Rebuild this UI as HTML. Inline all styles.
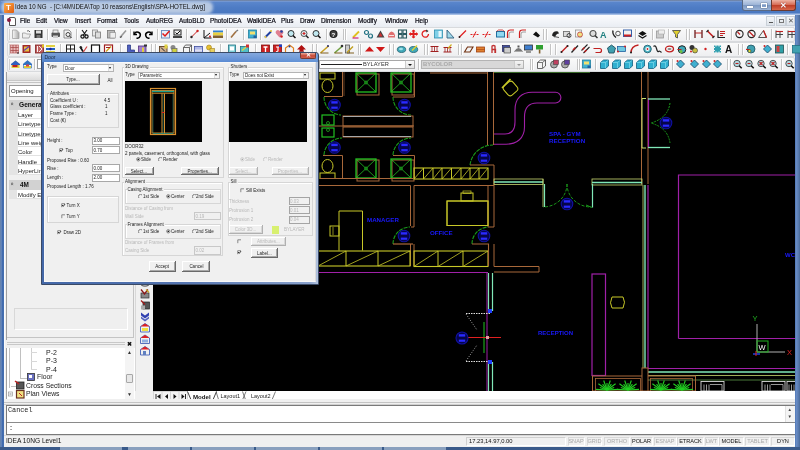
<!DOCTYPE html><html><head><meta charset="utf-8"><style>
*{margin:0;padding:0;box-sizing:border-box}
html,body{width:800px;height:450px;overflow:hidden;background:#f0f0f0;font-family:"Liberation Sans",sans-serif;color:#000}
.a{position:absolute}
.t{position:absolute;white-space:nowrap;line-height:1}
#frame{left:0;top:0;width:800px;height:450px;background:linear-gradient(90deg,#4f6d98 0,#7f9ac4 1px,#3f69ad 2px,#4670b0 4px,#4670b0 795px,#6a8ec8 796px,#5d7fb5 798px,#4a6a98 800px)}
#title{left:0;top:0;width:800px;height:15px;background:linear-gradient(180deg,#55657e 0,#8aa6d6 1px,#5a86cc 2px,#4d7bc4 8px,#4a78c0 13px,#a6bfe6 14px);border-radius:4px 4px 0 0}
#inner{left:4px;top:15px;width:791px;height:432px;background:#f0f0f0}
#menubar{left:4px;top:15px;width:791px;height:12px;background:linear-gradient(180deg,#fbfcfe,#e9edf3)}
#draw{left:153px;top:72px;width:642px;height:319px;background:#000;overflow:hidden}
.tb{position:absolute;height:14.5px;background:linear-gradient(180deg,#fafafa,#eeeff1);border:1px solid #d8dadd;border-radius:2px}
.sep{position:absolute;width:1px;height:11px;background:#c8c8c8;border-right:1px solid #fff}
.ic{position:absolute;width:9px;height:9px}
.menu{font-size:7px;color:#0a0a14;-webkit-text-stroke:0.2px #0a0a14}
</style></head><body><div id="wrap" class="a" style="left:0;top:0;width:800px;height:450px;overflow:hidden;filter:blur(0.35px)">
<div id="frame" class="a"></div>
<div id="title" class="a"></div>
<div class="a" style="left:1px;top:1px;width:212px;height:13px;background:#b8c9e2;border-radius:6px;filter:blur(1.5px)"></div>
<div class="a" style="left:4px;top:3px;width:10px;height:10px;background:linear-gradient(135deg,#ffb04a,#e05a10);border-radius:1px"></div>
<div class="t" style="left:6px;top:4px;font-size:8px;font-weight:bold;color:#fff">T</div>
<div class="t" style="left:15px;top:3px;font-size:7.6px;color:#111;transform-origin:0 0;transform:scaleX(0.813)">Idea 10 NG&nbsp; - [C:\4M\IDEA\Top 10 reasons\English\SPA-HOTEL.dwg]</div>
<div class="a" style="left:742px;top:0;width:15.5px;height:11px;background:linear-gradient(180deg,#c4d2e8,#9fb6d8 45%,#7e9ac4 55%,#9cb4d6);border:1px solid #5a6a84;border-top:none;border-radius:0 0 0 3px"></div>
<div class="a" style="left:746.5px;top:6px;width:6px;height:1.6px;background:#fff;box-shadow:0 0 1px #333"></div>
<div class="a" style="left:757px;top:0;width:14.5px;height:11px;background:linear-gradient(180deg,#c4d2e8,#9fb6d8 45%,#7e9ac4 55%,#9cb4d6);border:1px solid #5a6a84;border-top:none;border-left:none"></div>
<div class="a" style="left:760.5px;top:3px;width:6.5px;height:5px;border:1px solid #fff;border-top-width:1.6px;box-shadow:0 0 1px #333"></div>
<div class="a" style="left:771px;top:0;width:25px;height:11px;background:linear-gradient(180deg,#eeb4a4,#d8705a 45%,#c04028 55%,#d8684c);border:1px solid #6a3a30;border-top:none;border-radius:0 0 3px 0"></div>
<div class="t" style="left:780px;top:1.5px;font-size:8px;font-weight:bold;color:#fff;text-shadow:0 0 1px #600">&#x2715;</div>
<div id="inner" class="a"></div>
<div id="menubar" class="a"></div>
<div class="t menu" style="left:20px;top:18px;font-size:6.4px">File</div>
<div class="t menu" style="left:36px;top:18px;font-size:6.4px">Edit</div>
<div class="t menu" style="left:54px;top:18px;font-size:6.4px">View</div>
<div class="t menu" style="left:75px;top:18px;font-size:6.4px">Insert</div>
<div class="t menu" style="left:97px;top:18px;font-size:6.4px">Format</div>
<div class="t menu" style="left:124px;top:18px;font-size:6.4px">Tools</div>
<div class="t menu" style="left:146px;top:18px;font-size:6.4px">AutoREG</div>
<div class="t menu" style="left:179px;top:18px;font-size:6.4px">AutoBLD</div>
<div class="t menu" style="left:210px;top:18px;font-size:6.4px">PhotoIDEA</div>
<div class="t menu" style="left:247px;top:18px;font-size:6.4px">WalkIDEA</div>
<div class="t menu" style="left:281px;top:18px;font-size:6.4px">Plus</div>
<div class="t menu" style="left:300px;top:18px;font-size:6.4px">Draw</div>
<div class="t menu" style="left:321px;top:18px;font-size:6.4px">Dimension</div>
<div class="t menu" style="left:358px;top:18px;font-size:6.4px">Modify</div>
<div class="t menu" style="left:385px;top:18px;font-size:6.4px">Window</div>
<div class="t menu" style="left:415px;top:18px;font-size:6.4px">Help</div>
<div class="a" style="left:9px;top:17px;width:7px;height:9px;background:#fff;border:1px solid #555;border-radius:0 2px 0 0"></div>
<div class="a" style="left:7px;top:18px;width:4px;height:4px;background:#8a1a40;border-radius:50%"></div>
<div class="a" style="left:766px;top:16px;width:9px;height:10px;background:linear-gradient(180deg,#f4f6f8,#dde3ea);border:1px solid #c9d0d8"></div>
<div class="a" style="left:776px;top:16px;width:10px;height:10px;background:linear-gradient(180deg,#f4f6f8,#dde3ea);border:1px solid #c9d0d8"></div>
<div class="a" style="left:786px;top:16px;width:9px;height:10px;background:linear-gradient(180deg,#f4f6f8,#dde3ea);border:1px solid #c9d0d8"></div>
<div class="a" style="left:769px;top:22px;width:4px;height:1px;background:#555"></div>
<div class="a" style="left:779px;top:19px;width:5px;height:4px;border:1px solid #777"></div>
<div class="t" style="left:788px;top:17px;font-size:7px;color:#555">&#x2715;</div>
<div class="tb" style="left:7px;top:27px;width:788px"></div>
<div class="tb" style="left:7px;top:42px;width:788px"></div>
<div class="tb" style="left:7px;top:57px;width:788px"></div>
<svg class="a" style="left:0;top:0" width="800" height="75" viewBox="0 0 800 75"><g transform="translate(11,29.5)"><defs><linearGradient id="gd" x1="0" x2="1"><stop offset="0" stop-color="#fafafa"/><stop offset="1" stop-color="#a8a8a8"/></linearGradient></defs><path d="M1.5 0.5h4l2.5 2.5v6h-6.5z" fill="url(#gd)" stroke="#999" stroke-width=".7"/></g><g transform="translate(22,29.5)"><path d="M0.5 3.5h3l1 1h4l-1.5 4h-6.5z" fill="#eee" stroke="#999" stroke-width=".8"/><path d="M5 1.5q2-1 3 1" stroke="#555" fill="none" stroke-width=".9"/></g><g transform="translate(34,29.5)"><rect x="0.5" y="0.5" width="8" height="8" fill="#333"/><rect x="2" y="1" width="5" height="3" fill="#ddd"/><rect x="2.5" y="5.5" width="4" height="3" fill="#777"/></g><g transform="translate(51,29.5)"><rect x="0.5" y="3" width="8.5" height="4.5" rx="1" fill="#555"/><rect x="2" y="0.5" width="5" height="3" fill="#eee" stroke="#666" stroke-width=".6"/><rect x="2" y="6" width="5" height="2.5" fill="#ccc"/></g><g transform="translate(63,29.5)"><path d="M1 0.5h5l2 2v6h-7z" fill="#f4f4f4" stroke="#777" stroke-width=".8"/><circle cx="5" cy="5" r="2" fill="none" stroke="#333" stroke-width=".9"/><path d="M6.5 6.5l2 2" stroke="#333"/></g><g transform="translate(80,29.5)"><circle cx="2.5" cy="7" r="1.6" fill="none" stroke="#111" stroke-width="1.2"/><circle cx="6.5" cy="7" r="1.6" fill="none" stroke="#111" stroke-width="1.2"/><path d="M2 0.5l4 5.5M7 0.5l-4 5.5" stroke="#111" stroke-width="1.1"/></g><g transform="translate(92,29.5)"><rect x="0.5" y="0.5" width="5" height="6" fill="#e8e8e8" stroke="#888" stroke-width=".8"/><rect x="3.5" y="2.5" width="5" height="6" fill="#ddd" stroke="#777" stroke-width=".8"/></g><g transform="translate(107,29.5)"><rect x="0.5" y="1" width="7" height="7.5" fill="#bbb" stroke="#777" stroke-width=".8"/><rect x="3" y="3" width="5.5" height="5.5" fill="#eee" stroke="#888" stroke-width=".6"/></g><g transform="translate(119,29.5)"><path d="M1 8l6-7" stroke="#999" stroke-width="1.6"/><path d="M1 8l2-1" stroke="#555" stroke-width="1.2"/></g><g transform="translate(132,29.5)"><path d="M2 2v3h3" fill="none" stroke="#000" stroke-width="1.4"/><path d="M2.5 4.5a3 3 0 1 1 2 4" fill="none" stroke="#000" stroke-width="1.5"/></g><g transform="translate(145,29.5)"><path d="M7 2v3h-3" fill="none" stroke="#000" stroke-width="1.4"/><path d="M6.5 4.5a3 3 0 1 0 -2 4" fill="none" stroke="#000" stroke-width="1.5"/></g><g transform="translate(161,29.5)"><rect x="0.5" y="1" width="8" height="7.5" fill="#e8eef8" stroke="#6688bb" stroke-width=".9"/><path d="M1.5 4l2.5 2.5 4.5-5" fill="none" stroke="#e01818" stroke-width="1.5"/></g><g transform="translate(173,29.5)"><rect x="1" y="0.5" width="7" height="5" fill="#eee" stroke="#222" stroke-width="1"/><path d="M2.5 3l1.5 1.5 3-3" stroke="#111" fill="none"/><rect x="0" y="6.5" width="9" height="2" fill="#444"/></g><g transform="translate(190,29.5)"><path d="M1 8l7-7" stroke="#cc2020" stroke-width="1"/><circle cx="1.5" cy="7.5" r="1.2" fill="#222"/><circle cx="7.5" cy="1.5" r="1.2" fill="#cc2020"/></g><g transform="translate(203,29.5)"><path d="M1 0.5v8h7.5M1 8.5l6-5" stroke="#111" stroke-width="1" fill="none"/><circle cx="7" cy="7" r="1" fill="#d22"/></g><g transform="translate(213,29.5)"><rect x="0" y="1" width="10" height="2" fill="#3080d0"/><rect x="0" y="3" width="10" height="3" fill="#e8d040"/><rect x="0" y="6" width="10" height="2.5" fill="#806030"/></g><g transform="translate(230,29.5)"><path d="M1 8l5-6" stroke="#a07040" stroke-width="1.6"/><path d="M6 2l2-1.5" stroke="#777" stroke-width="1.4"/></g><g transform="translate(248,29.5)"><rect x="0.5" y="0.5" width="8" height="8" fill="#40b0d0" stroke="#2080a0" stroke-width=".8"/><rect x="2" y="2" width="5" height="3" fill="#f0e070"/><rect x="5.5" y="6" width="3" height="2.5" fill="#2060a0"/></g><g transform="translate(264,29.5)"><path d="M1 8l6-6" stroke="#2040a0" stroke-width="2"/><path d="M6 1.5l2 0" stroke="#e0c030" stroke-width="1.5"/><circle cx="1.5" cy="7.5" r="1" fill="#f0d040"/></g><g transform="translate(275,29.5)"><path d="M4.5 8l-3.5-4a2 2 0 0 1 3.5-2.5a2 2 0 0 1 3.5 2.5z" fill="#e08090"/><circle cx="6.5" cy="2" r="1.3" fill="#2040a0"/><circle cx="6.5" cy="7" r="1.3" fill="#d02020"/></g><g transform="translate(287,29.5)"><circle cx="4" cy="4" r="3" fill="#c0e8f0" stroke="#333" stroke-width="1"/><path d="M6 6l2.5 2.5" stroke="#111" stroke-width="1.5"/></g><g transform="translate(300,29.5)"><circle cx="4" cy="4" r="3" fill="#e0f0f4" stroke="#555" stroke-width="1"/><path d="M2.5 4h3M4 2.5v3" stroke="#d02020" stroke-width="1.1"/><path d="M6 6l2.5 2.5" stroke="#222" stroke-width="1.5"/></g><g transform="translate(312,29.5)"><circle cx="4" cy="4" r="3" fill="#c0e8f0" stroke="#333" stroke-width="1"/><path d="M6 6l2.5 2.5" stroke="#111" stroke-width="1.5"/></g><g transform="translate(329,29.5)"><circle cx="4.5" cy="4.5" r="4" fill="#1a1a1a"/><circle cx="4.5" cy="4.5" r="3" fill="#444"/><text x="2.6" y="7" font-size="6" font-weight="bold" fill="#fff" font-family="Liberation Sans">?</text></g><g transform="translate(352,29.5)"><path d="M1 8l6-6" stroke="#e0c020" stroke-width="1.8"/><path d="M0.5 8.5h6" stroke="#d02080" stroke-width="1.2"/></g><g transform="translate(364,29.5)"><circle cx="2.5" cy="3" r="2" fill="none" stroke="#207080" stroke-width="1.2"/><circle cx="6.5" cy="6.5" r="2" fill="none" stroke="#207080" stroke-width="1.2"/></g><g transform="translate(376,29.5)"><path d="M4.5 1l4 7h-8z" fill="#444"/><path d="M4.5 3l2 4h-4z" fill="#d03030"/></g><g transform="translate(387,29.5)"><path d="M1 8q0-5 3.5-6q4 1 3.5 6z" fill="#e07070"/><path d="M2 6h5" stroke="#fff" stroke-width=".8"/></g><g transform="translate(398,29.5)"><rect x="0.5" y="0.5" width="3.5" height="3.5" fill="none" stroke="#2a5a60" stroke-width="1.1"/><rect x="5" y="0.5" width="3.5" height="3.5" fill="none" stroke="#2a5a60" stroke-width="1.1"/><rect x="0.5" y="5" width="3.5" height="3.5" fill="none" stroke="#2a5a60" stroke-width="1.1"/><rect x="5" y="5" width="3.5" height="3.5" fill="none" stroke="#2a5a60" stroke-width="1.1"/></g><g transform="translate(409,29.5)"><path d="M4.5 0.5v8M0.5 4.5h8" stroke="#e02020" stroke-width="1.8"/><path d="M4.5 0l-2 2h4zM4.5 9l-2-2h4zM0 4.5l2-2v4zM9 4.5l-2-2v4z" fill="#e02020"/></g><g transform="translate(421,29.5)"><path d="M7.5 4.5a3.2 3.2 0 1 1 -2-3" fill="none" stroke="#e02020" stroke-width="1.3"/><path d="M5 0l2.5 1.5-2 1.5z" fill="#222"/></g><g transform="translate(434,29.5)"><rect x="0.5" y="0.5" width="8" height="8" fill="#80d0e8" stroke="#3090b0" stroke-width=".8"/><rect x="4.5" y="1.5" width="3" height="6" fill="#fff" opacity=".8"/></g><g transform="translate(446,29.5)"><path d="M1 8.5v-8l7 8z" fill="#a0d8e8" stroke="#306080" stroke-width=".9"/></g><g transform="translate(458,29.5)"><path d="M1 8l7-7" stroke="#e02020" stroke-width="1.2"/><circle cx="1.5" cy="7.5" r=".9" fill="#222"/></g><g transform="translate(470,29.5)"><path d="M0.5 5h8" stroke="#e02020" stroke-width="1" stroke-dasharray="2 1"/><path d="M3 8l3-6" stroke="#e02020" stroke-width="1"/></g><g transform="translate(482,29.5)"><path d="M0.5 5h8" stroke="#e02020" stroke-width="1" stroke-dasharray="2 1"/><path d="M3 8l3-6" stroke="#e02020" stroke-width="1"/></g><g transform="translate(496,29.5)"><rect x="0.5" y="2" width="8" height="5.5" fill="#90d8f0" stroke="#2070a0" stroke-width="1"/><path d="M0.5 2l2-1.5h4l2 1.5" stroke="#c02020" fill="none" stroke-width=".8"/></g><g transform="translate(506,29.5)"><path d="M1.5 8.5v-5q0-3 3-3h3.5" fill="none" stroke="#d02020" stroke-width="1.2"/><path d="M3 8.5v-4q0-2 2-2h3" fill="none" stroke="#888" stroke-width=".8"/></g><g transform="translate(518,29.5)"><path d="M1.5 8.5v-5q0-3 3-3h3.5" fill="none" stroke="#d02020" stroke-width="1.2"/><path d="M3 8.5v-4q0-2 2-2h3" fill="none" stroke="#888" stroke-width=".8"/></g><g transform="translate(532,29.5)"><path d="M1 5l3-3 4 4-2 2z" fill="#111"/></g><g transform="translate(551,29.5)"><path d="M1 6q1-5 6-4l1 2q-3 0-4 4z" fill="#222"/><path d="M3 7l5 1" stroke="#555"/></g><g transform="translate(563,29.5)"><rect x="0.5" y="2" width="6" height="5" fill="#ddd" stroke="#666" stroke-width=".8"/><circle cx="6" cy="6" r="2" fill="none" stroke="#444"/></g><g transform="translate(575,29.5)"><rect x="0.5" y="0.5" width="6" height="7" fill="#f4f4f4" stroke="#888" stroke-width=".7"/><circle cx="5" cy="5" r="2.5" fill="#f0e080" stroke="#c04040" stroke-width=".8"/></g><g transform="translate(589,29.5)"><circle cx="4" cy="4" r="3" fill="#ddd" stroke="#555" stroke-width="1.2"/><path d="M6 6l2.5 2.5" stroke="#333" stroke-width="1.5"/></g><g transform="translate(600,29.5)"><text x="0" y="8" font-size="9" font-weight="bold" fill="#208080" font-family="Liberation Sans">A</text></g><g transform="translate(612,29.5)"><path d="M1 1q-1 4 3 7" stroke="#222" stroke-width="1.4" fill="none"/><circle cx="6" cy="4" r="2.3" fill="none" stroke="#444" stroke-width=".9"/></g><g transform="translate(623,29.5)"><rect x="0.5" y="0.5" width="8" height="6.5" fill="#f0f0f0" stroke="#2050a0" stroke-width=".9"/><rect x="1" y="5" width="7" height="2" fill="#d02020"/></g><g transform="translate(638,29.5)"><path d="M0.5 4l4-2.5 4 2.5-4 2.5z" fill="#111"/><path d="M0.5 6l4 2.5 4-2.5" stroke="#111" fill="none" stroke-width="1.2"/></g><g transform="translate(656,29.5)"><rect x="0.5" y="1.5" width="7" height="7" fill="#ccc" stroke="#999" stroke-width=".8"/><rect x="2.5" y="0.5" width="6" height="4" fill="#eee" stroke="#aaa" stroke-width=".6"/></g><g transform="translate(672,29.5)"><path d="M0.5 1h8l-3 4v3.5l-2-1v-2.5z" fill="#e0d030" stroke="#444" stroke-width=".8"/></g><g transform="translate(694,29.5)"><path d="M1 0.5v8M8 0.5v8M1 3.5h7" stroke="#c02020" stroke-width="1.1"/><path d="M1 0.5v8M8 0.5v8" stroke="#444" stroke-width=".8"/></g><g transform="translate(706,29.5)"><path d="M1.5 1.5l6 6" stroke="#c02020" stroke-width="1.6"/><path d="M0.5 2.5l2-2M6.5 8.5l2-2" stroke="#222" stroke-width="1.2"/></g><g transform="translate(717,29.5)"><path d="M1 1v7h7" stroke="#222" stroke-width="1.2" fill="none"/><path d="M3 2h5M3 4h5M3 6h3" stroke="#c02020" stroke-width="1"/></g><g transform="translate(735,29.5)"><circle cx="4.5" cy="4.5" r="3.6" fill="none" stroke="#222" stroke-width="1.1"/><path d="M2.5 2.5l2.5 2.5" stroke="#c02020" stroke-width="1.2"/></g><g transform="translate(747,29.5)"><circle cx="4.5" cy="4.5" r="3.6" fill="none" stroke="#222" stroke-width="1.1"/><path d="M2 2l5 5" stroke="#c02020" stroke-width="1.3"/></g><g transform="translate(758,29.5)"><path d="M0.5 8h8l-3-7z" fill="none" stroke="#555" stroke-width="1"/><path d="M5.5 1l3 7" stroke="#c02020" stroke-width="1.3"/></g><g transform="translate(775,29.5)"><path d="M1 1v7.5M1 2h7M1 5h7M5 2v6.5" stroke="#444" stroke-width="1"/><path d="M1 2h7" stroke="#c02020" stroke-width="1.1"/></g><g transform="translate(787,29.5)"><path d="M1 1v7.5M1 2h7M1 5h7M5 2v6.5" stroke="#444" stroke-width="1"/><path d="M1 2h7" stroke="#c02020" stroke-width="1.1"/></g><g transform="translate(10,44.5)"><rect x="0.5" y="0.5" width="8" height="8" fill="#e8b8b8" stroke="#c07070" stroke-width=".8"/><path d="M3 0.5v8M6 0.5v8M0.5 3h8M0.5 6h8" stroke="#a04040" stroke-width=".7"/><circle cx="8" cy="8.5" r=".8" fill="#111"/></g><g transform="translate(22,44.5)"><rect x="0.5" y="0.5" width="8" height="8" fill="#a02828"/><rect x="2" y="2" width="5" height="5" fill="#e8c040"/><path d="M2 6l5-4" stroke="#6040c0" stroke-width="1.2"/></g><g transform="translate(35,44.5)"><rect x="0.5" y="0.5" width="8" height="8" fill="#c06060" stroke="#802020" stroke-width=".8"/><path d="M2.5 1.5v6M4 1.5l3 3-3 3" stroke="#fff" stroke-width=".9" fill="none"/><rect x="7" y="0" width="2" height="3" fill="#e0c020"/></g><g transform="translate(46,44.5)"><rect x="0" y="0.5" width="9" height="2" fill="#e0d040"/><rect x="0" y="3.5" width="9" height="2" fill="#2060c0"/><rect x="0" y="6.5" width="9" height="2" fill="#e0d040"/><circle cx="4.5" cy="4.5" r="1.2" fill="#2020a0"/></g><g transform="translate(66,44.5)"><rect x="0.5" y="0.5" width="8" height="8" fill="#fff" stroke="#222" stroke-width="1"/><path d="M4.5 0.5v8M0.5 4.5h8" stroke="#222" stroke-width="1"/></g><g transform="translate(79,44.5)"><path d="M1 2l3 5" stroke="#111" stroke-width="1.6"/><path d="M4 8l4-6" stroke="#d04040" stroke-width="1.2"/><circle cx="2" cy="3" r="1.2" fill="#222"/></g><g transform="translate(91,44.5)"><rect x="0.5" y="0.5" width="8" height="8" fill="#fff" stroke="#111" stroke-width="1.2"/></g><g transform="translate(104,44.5)"><rect x="0.5" y="0.5" width="8" height="8" fill="#fff" stroke="#a02020" stroke-width="1.2"/><path d="M2 7l5-5" stroke="#d0a020" stroke-width="1.4"/><path d="M2 3h4" stroke="#a02020"/></g><g transform="translate(126,44.5)"><path d="M1.5 0.5v8h7v-3h-4v-5z" fill="#5060c0" stroke="#203080" stroke-width=".7"/></g><g transform="translate(138,44.5)"><rect x="0.5" y="1.5" width="7.5" height="7" fill="#a080d0" stroke="#503080" stroke-width=".8"/><rect x="4" y="3" width="2" height="5" fill="#e0d040"/><rect x="6" y="0" width="3" height="2" fill="#333"/></g><g transform="translate(159,44.5)"><rect x="0.5" y="2" width="7.5" height="6.5" fill="#d0b090" stroke="#604020" stroke-width=".9"/><path d="M2 3l4 4" stroke="#222"/><rect x="5.5" y="0" width="3" height="4" fill="#e0d040"/></g><g transform="translate(170,44.5)"><circle cx="3" cy="3" r="2.5" fill="#888"/><rect x="2" y="4" width="5" height="4.5" fill="#d0d040" stroke="#666" stroke-width=".7"/></g><g transform="translate(183,44.5)"><path d="M0.5 3l2-2.5h6v6l-2 2.5h-6z" fill="#f4f4f4" stroke="#444" stroke-width=".8"/><path d="M0.5 3h6v5.5M6.5 3l2-2.5" stroke="#444" stroke-width=".8" fill="none"/></g><g transform="translate(194,44.5)"><rect x="0.5" y="2" width="8" height="6.5" fill="#b0b8e8" stroke="#4050a0" stroke-width=".8"/><rect x="1" y="5" width="7" height="2" fill="#e0e0f0"/></g><g transform="translate(206,44.5)"><circle cx="3" cy="3" r="2.5" fill="#e8c030" stroke="#a08020" stroke-width=".6"/><rect x="4" y="4" width="4.5" height="4.5" fill="#e8d060" stroke="#a08020" stroke-width=".6"/></g><g transform="translate(228,44.5)"><rect x="0.5" y="0.5" width="7" height="8" fill="#80d0d8" stroke="#207080" stroke-width=".8"/><rect x="2" y="2" width="4" height="4" fill="#fff"/></g><g transform="translate(240,44.5)"><rect x="0.5" y="2" width="8" height="6.5" fill="#50c0c8" stroke="#207080" stroke-width=".8"/><path d="M2 6l5-4" stroke="#e0d040" stroke-width="1.4"/><rect x="6" y="0" width="3" height="3" fill="#d03030"/></g><g transform="translate(261,44.5)"><rect x="0.5" y="0.5" width="8" height="8.5" fill="#d02020" stroke="#801010" stroke-width=".8"/><path d="M2.5 2.5h4M4.5 2.5v5" stroke="#fff" stroke-width="1.3"/></g><g transform="translate(273,44.5)"><rect x="0.5" y="0.5" width="8" height="8.5" fill="#d02020" stroke="#801010" stroke-width=".8"/><path d="M3 2.5h3M5 2.5v4l-2 1" stroke="#fff" stroke-width="1.1" fill="none"/><rect x="6" y="0" width="3" height="2.5" fill="#2040c0"/></g><g transform="translate(285,44.5)"><path d="M0.5 8.5v-5l4-3 4 3v5z" fill="#f4f4f4" stroke="#e08020" stroke-width="1.2"/><circle cx="4.5" cy="2" r="1" fill="#2040a0"/></g><g transform="translate(297,44.5)"><path d="M4.5 0.5l4.5 4.5h-2.5v2h-4v-2h-2.5z" fill="#b01010"/><rect x="2" y="7" width="5" height="2" fill="#700a0a"/></g><g transform="translate(320,44.5)"><path d="M0.5 8.5l8-7" stroke="#c8a020" stroke-width="1.6"/><path d="M0.5 8.5h8" stroke="#806020" stroke-width="1"/><circle cx="8" cy="1.5" r="1" fill="#2a2a6a"/></g><g transform="translate(334,44.5)"><path d="M0.5 8.5l8-7" stroke="#70a040" stroke-width="1.6"/><path d="M0.5 8.5h8" stroke="#806020" stroke-width="1"/><circle cx="8" cy="1.5" r="1.3" fill="#333"/></g><g transform="translate(345,44.5)"><rect x="0.5" y="0.5" width="4" height="8" fill="#ccc" stroke="#555" stroke-width=".8"/><path d="M2 8l6-6" stroke="#c0a020" stroke-width="1.4"/><path d="M2 8.5h7" stroke="#806020"/></g><g transform="translate(365,44.5)"><path d="M4.5 2l4.5 5h-9z" fill="#d01818"/></g><g transform="translate(376,44.5)"><path d="M4.5 7.5l4.5-5h-9z" fill="#d01818"/></g><g transform="translate(397,44.5)"><ellipse cx="4.5" cy="5" rx="4.2" ry="3" fill="#40a8b8" stroke="#206070" stroke-width=".8"/><ellipse cx="4" cy="4.5" rx="2" ry="1.2" fill="#a0e0e8"/></g><g transform="translate(409,44.5)"><ellipse cx="4.5" cy="5" rx="4.2" ry="3" fill="#40a8b8" stroke="#206070" stroke-width=".8"/><path d="M3 6l5-5" stroke="#e0d030" stroke-width="1.4"/></g><g transform="translate(430,44.5)"><path d="M0.5 2h8M0.5 7h8" stroke="#a02020" stroke-width="1.2"/><path d="M2 2v5M4.5 2v5M7 2v5" stroke="#a02020" stroke-width=".8"/></g><g transform="translate(443,44.5)"><path d="M0.5 3h8M0.5 7.5h8" stroke="#a02020" stroke-width="1.2"/><path d="M2 3v4.5M4.5 3v4.5M7 3v4.5" stroke="#a02020" stroke-width=".8"/><path d="M5 4l3.5-4" stroke="#d0b020" stroke-width="1.2"/></g><g transform="translate(464,44.5)"><path d="M0.5 7.5l3-5h5.5l-3 5z" fill="#f4f4f4" stroke="#703010" stroke-width="1.1"/></g><g transform="translate(476,44.5)"><rect x="0.5" y="2.5" width="8" height="5" fill="#e08030" stroke="#a04010" stroke-width=".8"/><path d="M0.5 5h8" stroke="#a04010" stroke-width=".6"/></g><g transform="translate(489,44.5)"><path d="M3 8.5v-7q1.5-1 3 0v7M3 5h3.5v3.5" fill="none" stroke="#c03030" stroke-width="1.3"/></g><g transform="translate(502,44.5)"><rect x="0.5" y="1" width="7" height="6" fill="#4050a0" stroke="#202050" stroke-width=".7"/><rect x="2" y="3" width="6.5" height="5.5" fill="#ccc" stroke="#333" stroke-width=".6"/></g><g transform="translate(514,44.5)"><path d="M0.5 6.5q4-6 8 0z" fill="#777"/><rect x="3.5" y="1" width="2" height="2" fill="#555"/><rect x="0" y="6.5" width="9" height="1" fill="#aaa"/></g><g transform="translate(524,44.5)"><rect x="0.5" y="0.5" width="8" height="5" fill="#4080d0" stroke="#333" stroke-width=".8"/><rect x="2" y="6" width="5" height="2.5" fill="#999"/></g><g transform="translate(535,44.5)"><rect x="1" y="0.5" width="7" height="4.5" fill="#30a030"/><rect x="3.8" y="5" width="1.6" height="4" fill="#806030"/></g><g transform="translate(560,44.5)"><path d="M1 8l7-7" stroke="#c02020" stroke-width="1.4"/><circle cx="1.5" cy="7.5" r="1" fill="#222"/><circle cx="7.5" cy="1.5" r="1" fill="#222"/></g><g transform="translate(570,44.5)"><path d="M1.5 8l6.5-7" stroke="#222" stroke-width="1.3"/><path d="M3 5.5l2.5-2.5" stroke="#c02020" stroke-width="1.6"/></g><g transform="translate(581,44.5)"><path d="M0.5 6l6-6M2.5 8.5l6-6" stroke="#222" stroke-width="1.1"/><path d="M1.5 5l2-2M3.5 7.5l2-2" stroke="#c02020" stroke-width="1.4"/></g><g transform="translate(593,44.5)"><path d="M0.5 4h6q2 0 2 2t-2 2h-4" fill="none" stroke="#c02020" stroke-width="1.2"/></g><g transform="translate(607,44.5)"><path d="M4.5 0.5l4 3-1.5 5h-5l-1.5-5z" fill="#40a0b0" stroke="#205060" stroke-width=".9"/></g><g transform="translate(617,44.5)"><rect x="0.5" y="2" width="8" height="5" fill="#70c8e0" stroke="#2060a0" stroke-width=".8"/><circle cx="1" cy="7" r="1" fill="#d02020"/><circle cx="8" cy="2" r="1" fill="#d02020"/></g><g transform="translate(630,44.5)"><path d="M1 8.5q0-7 7.5-8" fill="none" stroke="#c02020" stroke-width="1.4"/><circle cx="1" cy="8" r="1" fill="#222"/></g><g transform="translate(643,44.5)"><circle cx="4.5" cy="4.5" r="3.8" fill="#50b8c8" stroke="#206070" stroke-width=".9"/><circle cx="4.5" cy="4.5" r="2" fill="#fff"/><circle cx="4.5" cy="4.5" r=".9" fill="#c02020"/></g><g transform="translate(653,44.5)"><path d="M0.5 2q2-2 3 2t2 3 3 1" fill="none" stroke="#222" stroke-width="1.2"/></g><g transform="translate(665,44.5)"><ellipse cx="4.5" cy="4.5" rx="4" ry="2.8" fill="none" stroke="#c02020" stroke-width="1.3"/><ellipse cx="4.5" cy="4.5" rx="2" ry="1" fill="#888"/></g><g transform="translate(677,44.5)"><circle cx="5" cy="5" r="3.8" fill="#40a8b8" stroke="#222" stroke-width="1"/><path d="M0.5 5h4" stroke="#c02020"/><circle cx="4" cy="7" r="1.5" fill="#70c040"/></g><g transform="translate(689,44.5)"><circle cx="3" cy="3" r="2.5" fill="#333"/><circle cx="6" cy="6" r="2.5" fill="#c8c040" stroke="#333" stroke-width=".6"/><circle cx="2" cy="7" r="1" fill="#d02020"/></g><g transform="translate(701,44.5)"><circle cx="4.5" cy="4.5" r="1.2" fill="#d02020"/></g><g transform="translate(713,44.5)"><path d="M1 1h7v7h-7z" fill="#30a0b0"/><path d="M3 0v2M6 0v2M3 7v2M6 7v2M0 3h2M0 6h2M7 3h2M7 6h2" stroke="#f0f0f0" stroke-width="1"/></g><g transform="translate(725,44.5)"><text x="0" y="8.5" font-size="10" font-weight="bold" fill="#111" font-family="Liberation Sans">A</text></g><g transform="translate(746,44.5)"><circle cx="5" cy="4.5" r="4" fill="#40a0b0" stroke="#205060" stroke-width=".8"/><path d="M0 5h4" stroke="#c02020"/><circle cx="3.5" cy="6.5" r="1.5" fill="#e0e040" stroke="#333" stroke-width=".5"/></g><g transform="translate(763,44.5)"><path d="M4.5 0.5l4 4-4 4-4-4z" fill="#40b0d0" stroke="#205070" stroke-width=".9"/><circle cx="1.5" cy="1.5" r="1" fill="#d02020"/></g><g transform="translate(775,44.5)"><rect x="0.5" y="0.5" width="8" height="8" fill="#30a0a8" stroke="#205050" stroke-width=".8"/><rect x="1.5" y="1.5" width="3" height="6" fill="#d04040"/></g><g transform="translate(792,44.5)"><rect x="0.5" y="1" width="8" height="7.5" fill="#40a0b0" stroke="#207080" stroke-width=".8"/></g><g transform="translate(11,59.5)"><path d="M0.5 4.5l4-3.5 4 3.5v4h-8z" fill="#e0d040"/><path d="M0 4.5l4.5-3.5 4.5 3.5v1h-9z" fill="#3060c0"/><rect x="1.5" y="5.5" width="5" height="2" fill="#c02020"/></g><g transform="translate(23,59.5)"><path d="M0.5 4.5l4-3.5 4 3.5v4h-8z" fill="#f0f0f0" stroke="#3070c0" stroke-width=".7"/><path d="M0 4.5l4.5-3.5 4.5 3.5v1h-9z" fill="#3070c0"/><rect x="1" y="6.5" width="7" height="2" fill="#e0d030"/><rect x="3" y="5" width="3" height="2" fill="#e04040"/></g><g transform="translate(537,59.5)"><path d="M0.5 3l3-2.5h5v6l-3 2.5h-5z" fill="#f4f4f4" stroke="#444" stroke-width=".8"/><path d="M0.5 3h5v5.5M5.5 3l3-2.5" stroke="#444" stroke-width=".7" fill="none"/></g><g transform="translate(550,59.5)"><circle cx="4" cy="5" r="3.5" fill="#aaa" stroke="#444" stroke-width=".8"/><rect x="3.5" y="0.5" width="5" height="4.5" fill="#c04060" stroke="#444" stroke-width=".6"/></g><g transform="translate(561,59.5)"><circle cx="4" cy="5" r="3.5" fill="#aaa" stroke="#444" stroke-width=".8"/><rect x="3.5" y="0.5" width="5" height="4.5" fill="#6040a0" stroke="#444" stroke-width=".6"/></g><g transform="translate(582,59.5)"><rect x="0.5" y="0.5" width="8" height="8" fill="#40b0d0" stroke="#2080a0" stroke-width=".8"/><rect x="2" y="2" width="5" height="3" fill="#f0e070"/><rect x="5.5" y="6" width="3" height="2.5" fill="#2060a0"/></g><g transform="translate(600,59.5)"><path d="M0.5 3l3-2.5h5v6l-3 2.5h-5z" fill="#30b0d0" stroke="#106080" stroke-width=".8"/><path d="M0.5 3h5v5.5M5.5 3l3-2.5" stroke="#90e0f0" stroke-width=".6" fill="none"/></g><g transform="translate(612,59.5)"><path d="M0.5 3l3-2.5h5v6l-3 2.5h-5z" fill="#30b0d0" stroke="#106080" stroke-width=".8"/><path d="M0.5 3h5v5.5M5.5 3l3-2.5" stroke="#90e0f0" stroke-width=".6" fill="none"/></g><g transform="translate(624,59.5)"><path d="M0.5 3l3-2.5h5v6l-3 2.5h-5z" fill="#30b0d0" stroke="#106080" stroke-width=".8"/><path d="M0.5 3h5v5.5M5.5 3l3-2.5" stroke="#90e0f0" stroke-width=".6" fill="none"/></g><g transform="translate(636,59.5)"><path d="M0.5 3l3-2.5h5v6l-3 2.5h-5z" fill="#30b0d0" stroke="#106080" stroke-width=".8"/><path d="M0.5 3h5v5.5M5.5 3l3-2.5" stroke="#90e0f0" stroke-width=".6" fill="none"/></g><g transform="translate(648,59.5)"><path d="M0.5 3l3-2.5h5v6l-3 2.5h-5z" fill="#30b0d0" stroke="#106080" stroke-width=".8"/><path d="M0.5 3h5v5.5M5.5 3l3-2.5" stroke="#90e0f0" stroke-width=".6" fill="none"/></g><g transform="translate(660,59.5)"><path d="M0.5 3l3-2.5h5v6l-3 2.5h-5z" fill="#30b0d0" stroke="#106080" stroke-width=".8"/><path d="M0.5 3h5v5.5M5.5 3l3-2.5" stroke="#90e0f0" stroke-width=".6" fill="none"/></g><g transform="translate(676,59.5)"><path d="M4.5 0.5l4 4-4 4-4-4z" fill="#40b0d0" stroke="#205070" stroke-width=".9"/><circle cx="1.5" cy="1.5" r="1" fill="#d02020"/></g><g transform="translate(690,59.5)"><path d="M4.5 0.5l4 4-4 4-4-4z" fill="#40b0d0" stroke="#205070" stroke-width=".9"/><circle cx="1.5" cy="1.5" r="1" fill="#d02020"/></g><g transform="translate(702,59.5)"><path d="M4.5 0.5l4 4-4 4-4-4z" fill="#40b0d0" stroke="#205070" stroke-width=".9"/><circle cx="1.5" cy="1.5" r="1" fill="#d02020"/></g><g transform="translate(713,59.5)"><path d="M4.5 0.5l4 4-4 4-4-4z" fill="#40b0d0" stroke="#205070" stroke-width=".9"/><circle cx="1.5" cy="1.5" r="1" fill="#d02020"/></g><g transform="translate(733,59.5)"><circle cx="4" cy="4" r="3.2" fill="#b0d8e0" stroke="#444" stroke-width=".9"/><path d="M2.5 4h3" stroke="#c02020" stroke-width="1.1"/><path d="M6.2 6.2l2.5 2.5" stroke="#111" stroke-width="1.6"/></g><g transform="translate(745,59.5)"><circle cx="4" cy="4" r="3.2" fill="#b0d8e0" stroke="#444" stroke-width=".9"/><path d="M2.5 4h3" stroke="#c02020" stroke-width="1.1"/><path d="M6.2 6.2l2.5 2.5" stroke="#111" stroke-width="1.6"/></g><g transform="translate(757,59.5)"><circle cx="4" cy="4" r="3.2" fill="#b0d8e0" stroke="#444" stroke-width=".9"/><path d="M2.5 2.5l3 3M5.5 2.5l-3 3" stroke="#c02020" stroke-width="1.1"/><path d="M6.2 6.2l2.5 2.5" stroke="#111" stroke-width="1.6"/></g><g transform="translate(769,59.5)"><circle cx="4" cy="4" r="3.2" fill="#b0d8e0" stroke="#444" stroke-width=".9"/><path d="M2.5 2.5l3 3M5.5 2.5l-3 3" stroke="#c02020" stroke-width="1.1"/><path d="M6.2 6.2l2.5 2.5" stroke="#111" stroke-width="1.6"/></g><g transform="translate(785,59.5)"><circle cx="4" cy="4" r="3.2" fill="#b0d8e0" stroke="#444" stroke-width=".9"/><path d="M2.5 4h3" stroke="#c02020" stroke-width="1.1"/><path d="M6.2 6.2l2.5 2.5" stroke="#111" stroke-width="1.6"/></g><rect x="47" y="29" width="1" height="11" fill="#c4c4c4"/><rect x="48" y="29" width="1" height="11" fill="#fff"/><rect x="76" y="29" width="1" height="11" fill="#c4c4c4"/><rect x="77" y="29" width="1" height="11" fill="#fff"/><rect x="130" y="29" width="1" height="11" fill="#c4c4c4"/><rect x="131" y="29" width="1" height="11" fill="#fff"/><rect x="157" y="29" width="1" height="11" fill="#c4c4c4"/><rect x="158" y="29" width="1" height="11" fill="#fff"/><rect x="186" y="29" width="1" height="11" fill="#c4c4c4"/><rect x="187" y="29" width="1" height="11" fill="#fff"/><rect x="226" y="29" width="1" height="11" fill="#c4c4c4"/><rect x="227" y="29" width="1" height="11" fill="#fff"/><rect x="243" y="29" width="1" height="11" fill="#c4c4c4"/><rect x="244" y="29" width="1" height="11" fill="#fff"/><rect x="260" y="29" width="1" height="11" fill="#c4c4c4"/><rect x="261" y="29" width="1" height="11" fill="#fff"/><rect x="326" y="29" width="1" height="11" fill="#c4c4c4"/><rect x="327" y="29" width="1" height="11" fill="#fff"/><rect x="343" y="29" width="1" height="11" fill="#c4c4c4"/><rect x="344" y="29" width="1" height="11" fill="#fff"/><rect x="345" y="29" width="1" height="11" fill="#c4c4c4"/><rect x="346" y="29" width="1" height="11" fill="#fff"/><rect x="543" y="29" width="1" height="11" fill="#c4c4c4"/><rect x="544" y="29" width="1" height="11" fill="#fff"/><rect x="546" y="29" width="1" height="11" fill="#c4c4c4"/><rect x="547" y="29" width="1" height="11" fill="#fff"/><rect x="635" y="29" width="1" height="11" fill="#c4c4c4"/><rect x="636" y="29" width="1" height="11" fill="#fff"/><rect x="652" y="29" width="1" height="11" fill="#c4c4c4"/><rect x="653" y="29" width="1" height="11" fill="#fff"/><rect x="668" y="29" width="1" height="11" fill="#c4c4c4"/><rect x="669" y="29" width="1" height="11" fill="#fff"/><rect x="686" y="29" width="1" height="11" fill="#c4c4c4"/><rect x="687" y="29" width="1" height="11" fill="#fff"/><rect x="689" y="29" width="1" height="11" fill="#c4c4c4"/><rect x="690" y="29" width="1" height="11" fill="#fff"/><rect x="731" y="29" width="1" height="11" fill="#c4c4c4"/><rect x="732" y="29" width="1" height="11" fill="#fff"/><rect x="771" y="29" width="1" height="11" fill="#c4c4c4"/><rect x="772" y="29" width="1" height="11" fill="#fff"/><rect x="60" y="44" width="1" height="11" fill="#c4c4c4"/><rect x="61" y="44" width="1" height="11" fill="#fff"/><rect x="120" y="44" width="1" height="11" fill="#c4c4c4"/><rect x="121" y="44" width="1" height="11" fill="#fff"/><rect x="151" y="44" width="1" height="11" fill="#c4c4c4"/><rect x="152" y="44" width="1" height="11" fill="#fff"/><rect x="155" y="44" width="1" height="11" fill="#c4c4c4"/><rect x="156" y="44" width="1" height="11" fill="#fff"/><rect x="220" y="44" width="1" height="11" fill="#c4c4c4"/><rect x="221" y="44" width="1" height="11" fill="#fff"/><rect x="255" y="44" width="1" height="11" fill="#c4c4c4"/><rect x="256" y="44" width="1" height="11" fill="#fff"/><rect x="312" y="44" width="1" height="11" fill="#c4c4c4"/><rect x="313" y="44" width="1" height="11" fill="#fff"/><rect x="316" y="44" width="1" height="11" fill="#c4c4c4"/><rect x="317" y="44" width="1" height="11" fill="#fff"/><rect x="358" y="44" width="1" height="11" fill="#c4c4c4"/><rect x="359" y="44" width="1" height="11" fill="#fff"/><rect x="360" y="44" width="1" height="11" fill="#c4c4c4"/><rect x="361" y="44" width="1" height="11" fill="#fff"/><rect x="389" y="44" width="1" height="11" fill="#c4c4c4"/><rect x="390" y="44" width="1" height="11" fill="#fff"/><rect x="393" y="44" width="1" height="11" fill="#c4c4c4"/><rect x="394" y="44" width="1" height="11" fill="#fff"/><rect x="424" y="44" width="1" height="11" fill="#c4c4c4"/><rect x="425" y="44" width="1" height="11" fill="#fff"/><rect x="427" y="44" width="1" height="11" fill="#c4c4c4"/><rect x="428" y="44" width="1" height="11" fill="#fff"/><rect x="458" y="44" width="1" height="11" fill="#c4c4c4"/><rect x="459" y="44" width="1" height="11" fill="#fff"/><rect x="461" y="44" width="1" height="11" fill="#c4c4c4"/><rect x="462" y="44" width="1" height="11" fill="#fff"/><rect x="550" y="44" width="1" height="11" fill="#c4c4c4"/><rect x="551" y="44" width="1" height="11" fill="#fff"/><rect x="555" y="44" width="1" height="11" fill="#c4c4c4"/><rect x="556" y="44" width="1" height="11" fill="#fff"/><rect x="738" y="44" width="1" height="11" fill="#c4c4c4"/><rect x="739" y="44" width="1" height="11" fill="#fff"/><rect x="742" y="44" width="1" height="11" fill="#c4c4c4"/><rect x="743" y="44" width="1" height="11" fill="#fff"/><rect x="787" y="44" width="1" height="11" fill="#c4c4c4"/><rect x="788" y="44" width="1" height="11" fill="#fff"/><rect x="34" y="59" width="1" height="11" fill="#c4c4c4"/><rect x="35" y="59" width="1" height="11" fill="#fff"/><rect x="418" y="59" width="1" height="11" fill="#c4c4c4"/><rect x="419" y="59" width="1" height="11" fill="#fff"/><rect x="530" y="59" width="1" height="11" fill="#c4c4c4"/><rect x="531" y="59" width="1" height="11" fill="#fff"/><rect x="532" y="59" width="1" height="11" fill="#c4c4c4"/><rect x="533" y="59" width="1" height="11" fill="#fff"/><rect x="577" y="59" width="1" height="11" fill="#c4c4c4"/><rect x="578" y="59" width="1" height="11" fill="#fff"/><rect x="579" y="59" width="1" height="11" fill="#c4c4c4"/><rect x="580" y="59" width="1" height="11" fill="#fff"/><rect x="595" y="59" width="1" height="11" fill="#c4c4c4"/><rect x="596" y="59" width="1" height="11" fill="#fff"/><rect x="672" y="59" width="1" height="11" fill="#c4c4c4"/><rect x="673" y="59" width="1" height="11" fill="#fff"/><rect x="727" y="59" width="1" height="11" fill="#c4c4c4"/><rect x="728" y="59" width="1" height="11" fill="#fff"/><rect x="730" y="59" width="1" height="11" fill="#c4c4c4"/><rect x="731" y="59" width="1" height="11" fill="#fff"/><rect x="781" y="59" width="1" height="11" fill="#c4c4c4"/><rect x="782" y="59" width="1" height="11" fill="#fff"/><rect x="9" y="29" width="1" height="11" fill="#d0d0d0"/><rect x="9" y="44" width="1" height="11" fill="#d0d0d0"/><rect x="9" y="59" width="1" height="11" fill="#d0d0d0"/></svg>
<div class="a" style="left:37px;top:59px;width:6px;height:10px;background:#fff;border:1px solid #9a9a9a;border-right:none"></div>
<div class="a" style="left:319px;top:60px;width:96px;height:8.5px;background:#fff;border:1px solid #a8a8a8"></div>
<div class="a" style="left:321px;top:64px;width:41px;height:1px;background:#222"></div>
<div class="t" style="left:363px;top:61.8px;font-size:5.7px;color:#333">BYLAYER</div>
<div class="a" style="left:405px;top:61px;width:9px;height:6.5px;background:linear-gradient(#fafafa,#e4e4e4);border-left:1px solid #ccc"></div>
<div class="a" style="left:407.5px;top:63.5px;width:0;height:0;border-left:2.5px solid transparent;border-right:2.5px solid transparent;border-top:2.5px solid #111"></div>
<div class="a" style="left:421px;top:60px;width:103px;height:8.5px;background:#d8d8d8;border:1px solid #b4b4b4"></div>
<div class="t" style="left:423px;top:61.8px;font-size:5.9px;color:#a8a8a8;font-weight:bold">BYCOLOR</div>
<div class="a" style="left:514px;top:61px;width:9px;height:6.5px;background:linear-gradient(#f4f4f4,#e0e0e0);border-left:1px solid #ccc"></div>
<div class="a" style="left:516.5px;top:63.5px;width:0;height:0;border-left:2.5px solid transparent;border-right:2.5px solid transparent;border-top:2.5px solid #999"></div>
<div class="a" style="left:4px;top:72px;width:1px;height:328px;background:#fcfcfc"></div>
<div class="a" style="left:6px;top:72px;width:1px;height:327px;background:#a0a0a0"></div>
<div class="a" style="left:7px;top:72px;width:128px;height:9px;background:linear-gradient(#f4f4f4,#dcdcdc);border-bottom:1px solid #c8c8c8"></div>
<div class="a" style="left:7px;top:82px;width:127px;height:256px;border:1px solid #c4c4c4;border-left:none;background:#f0f0f0"></div>
<div class="a" style="left:9px;top:85px;width:130px;height:12px;background:#fff;border:1px solid #9a9a9a"></div>
<div class="t" style="left:11px;top:88.3px;font-size:6px;color:#111">Opening</div>
<div class="a" style="left:9px;top:100px;width:35px;height:9.5px;background:#d2d2d2"></div>
<div class="t" style="left:10.5px;top:101px;font-size:6px;color:#333;transform:rotate(90deg)">&#x00AB;</div>
<div class="t" style="left:19px;top:101.5px;font-size:6.6px;font-weight:bold;color:#111">General</div>
<div class="a" style="left:9px;top:109.50px;width:8px;height:9.33px;background:#e4e4e4"></div>
<div class="a" style="left:17px;top:109.50px;width:30px;height:9.33px;background:#fff;border-bottom:1px solid #e2e2e2;border-left:1px solid #e8e8e8"></div>
<div class="t" style="left:18px;top:111.90px;font-size:6px;color:#222">Layer</div>
<div class="a" style="left:9px;top:118.83px;width:8px;height:9.33px;background:#e4e4e4"></div>
<div class="a" style="left:17px;top:118.83px;width:30px;height:9.33px;background:#fff;border-bottom:1px solid #e2e2e2;border-left:1px solid #e8e8e8"></div>
<div class="t" style="left:18px;top:121.23px;font-size:6px;color:#222">Linetype</div>
<div class="a" style="left:9px;top:128.16px;width:8px;height:9.33px;background:#e4e4e4"></div>
<div class="a" style="left:17px;top:128.16px;width:30px;height:9.33px;background:#fff;border-bottom:1px solid #e2e2e2;border-left:1px solid #e8e8e8"></div>
<div class="t" style="left:18px;top:130.56px;font-size:6px;color:#222">Linetype scale</div>
<div class="a" style="left:9px;top:137.49px;width:8px;height:9.33px;background:#e4e4e4"></div>
<div class="a" style="left:17px;top:137.49px;width:30px;height:9.33px;background:#fff;border-bottom:1px solid #e2e2e2;border-left:1px solid #e8e8e8"></div>
<div class="t" style="left:18px;top:139.89px;font-size:6px;color:#222">Line weight</div>
<div class="a" style="left:9px;top:146.82px;width:8px;height:9.33px;background:#e4e4e4"></div>
<div class="a" style="left:17px;top:146.82px;width:30px;height:9.33px;background:#fff;border-bottom:1px solid #e2e2e2;border-left:1px solid #e8e8e8"></div>
<div class="t" style="left:18px;top:149.22px;font-size:6px;color:#222">Color</div>
<div class="a" style="left:9px;top:156.15px;width:8px;height:9.33px;background:#e4e4e4"></div>
<div class="a" style="left:17px;top:156.15px;width:30px;height:9.33px;background:#fff;border-bottom:1px solid #e2e2e2;border-left:1px solid #e8e8e8"></div>
<div class="t" style="left:18px;top:158.55px;font-size:6px;color:#222">Handle</div>
<div class="a" style="left:9px;top:165.48px;width:8px;height:9.33px;background:#e4e4e4"></div>
<div class="a" style="left:17px;top:165.48px;width:30px;height:9.33px;background:#fff;border-bottom:1px solid #e2e2e2;border-left:1px solid #e8e8e8"></div>
<div class="t" style="left:18px;top:167.88px;font-size:6px;color:#222">HyperLink</div>
<div class="a" style="left:9px;top:179.5px;width:35px;height:10px;background:#d2d2d2"></div>
<div class="t" style="left:10.5px;top:181px;font-size:6px;color:#333;transform:rotate(90deg)">&#x00AB;</div>
<div class="t" style="left:20px;top:181.5px;font-size:6.4px;font-weight:bold;color:#111">4M</div>
<div class="a" style="left:9px;top:189.5px;width:8px;height:9.5px;background:#e4e4e4"></div>
<div class="a" style="left:17px;top:189.5px;width:30px;height:9.5px;background:#fff;border-bottom:1px solid #e2e2e2"></div>
<div class="t" style="left:18px;top:191.9px;font-size:6px;color:#222">Modify En</div>
<div class="a" style="left:14px;top:308px;width:114px;height:22px;border:1px solid #d8d8d8;border-right-color:#fff;border-bottom-color:#fff;background:#efefef"></div>
<div class="a" style="left:5px;top:340px;width:130px;height:8px;background:#f0f0f0"></div>
<div class="a" style="left:7px;top:342px;width:118px;height:3px;border-top:1px solid #c8c8c8;border-bottom:1px solid #c8c8c8"></div>
<div class="t" style="left:127px;top:340.5px;font-size:6px;color:#111;font-weight:bold">&#x2716;</div>
<div class="a" style="left:6px;top:348px;width:129px;height:51px;background:#fff;border-left:1px solid #a0a0a0"></div>
<div class="a" style="left:125px;top:348px;width:9px;height:51px;background:#f4f4f4"></div>
<div class="t" style="left:127px;top:350px;font-size:5px;color:#333">&#x25B2;</div>
<div class="t" style="left:127px;top:392px;font-size:5px;color:#333">&#x25BC;</div>
<div class="a" style="left:126px;top:374px;width:7px;height:9px;background:#e8e8e8;border:1px solid #a8a8a8;border-radius:1px"></div>
<div class="a" style="left:20px;top:348px;width:1px;height:30px;background:#c0c0c0"></div>
<div class="a" style="left:20px;top:378px;width:7px;height:1px;background:#c0c0c0"></div>
<div class="a" style="left:31px;top:348px;width:1px;height:21px;background:#d0d0d0"></div>
<div class="a" style="left:31px;top:352px;width:6px;height:1px;background:#d8d8d8"></div>
<div class="a" style="left:31px;top:360.5px;width:6px;height:1px;background:#d8d8d8"></div>
<div class="a" style="left:31px;top:369px;width:6px;height:1px;background:#d8d8d8"></div>
<div class="a" style="left:11px;top:386px;width:5px;height:1px;background:#c0c0c0"></div>
<div class="a" style="left:9px;top:348px;width:1px;height:40px;background:#c0c0c0"></div>
<div class="t" style="left:46px;top:348.5px;font-size:7px;color:#222">P-2</div>
<div class="t" style="left:46px;top:357px;font-size:7px;color:#222">P-3</div>
<div class="t" style="left:46px;top:365.5px;font-size:7px;color:#222">P-4</div>
<div class="t" style="left:37px;top:374px;font-size:6.8px;color:#222">Floor</div>
<div class="t" style="left:26px;top:382.5px;font-size:6.8px;color:#222">Cross Sections</div>
<div class="t" style="left:26px;top:391px;font-size:6.8px;color:#222">Plan Views</div>
<svg class="a" style="left:0;top:370px" width="40" height="32"><rect x="27.5" y="3.5" width="7" height="7" fill="#6a70c0" stroke="#333" stroke-width=".8"/><rect x="29" y="5" width="3" height="3" fill="#fff"/><rect x="16.5" y="12" width="7.5" height="7" fill="#555" stroke="#222" stroke-width=".8"/><path d="M15 11l4 3" stroke="#c02020" stroke-width="1.4"/><rect x="16.5" y="20.5" width="7.5" height="7.5" fill="#f0e080" stroke="#6a3020" stroke-width="1.2"/><path d="M19 23l3 3" stroke="#c02020"/><rect x="8.5" y="22" width="4" height="4" fill="#fff" stroke="#999" stroke-width=".7"/><path d="M9.5 24h2" stroke="#555" stroke-width=".7"/></svg>
<div class="a" style="left:135px;top:72px;width:18px;height:319px;background:#f0f0f0;border-left:1px solid #d8d8d8"></div>
<svg class="a" style="left:0;top:0" width="160" height="400"><g transform="translate(140,281.5)"><path d="M1 2.5q4 3 8 0v1.5q-4 2.5-8 0z" fill="#666"/></g><g transform="translate(140,289.5)"><rect x="1" y="3.5" width="8" height="5" fill="#888" stroke="#333" stroke-width=".7"/><path d="M1 0l4 5M8 0l-4 5" stroke="#8a1a1a" stroke-width="1.3"/><path d="M6 0l3 3" stroke="#c0a020" stroke-width="1.2"/></g><g transform="translate(140,300.5)"><rect x="3" y="1.5" width="6.5" height="7" fill="#555" stroke="#222" stroke-width=".7"/><rect x="1" y="5" width="4" height="4" fill="#aaa"/><path d="M1 0l4 4" stroke="#a01a1a" stroke-width="1.3"/></g><g transform="translate(140,311.5)"><path d="M1 1l4 3 4-3v3l-4 3-4-3z" fill="#3040b0"/><path d="M1 5l4 3 4-3v2l-4 3-4-3z" fill="#5060c0"/></g><g transform="translate(140,323.0)"><path d="M0.5 3.5l4.5-3 4.5 3v5.5h-9z" fill="#f0f0f0" stroke="#3050b0" stroke-width=".8"/><path d="M0.5 3.5l4.5-3 4.5 3z" fill="#e02020"/><rect x="2" y="5" width="6" height="3" fill="#f0e040"/></g><g transform="translate(140,334.5)"><path d="M0.5 3.5l4.5-3 4.5 3v5.5h-9z" fill="#f0f0f0" stroke="#3050b0" stroke-width=".8"/><path d="M0.5 3.5l4.5-3 4.5 3z" fill="#e02020"/><rect x="2" y="5" width="6" height="3" fill="#90b0e0"/></g><g transform="translate(140,346.0)"><path d="M0.5 3.5l4.5-3 4.5 3v5.5h-9z" fill="#f0f0f0" stroke="#3050b0" stroke-width=".8"/><path d="M0.5 3.5l4.5-3 4.5 3z" fill="#e02020"/><rect x="3" y="5" width="3" height="4" fill="#6080c0"/></g></svg>
<div class="a" style="left:135px;top:391px;width:660px;height:12px;background:#fff"></div>
<div class="a" style="left:135px;top:391px;width:18px;height:12px;background:#f0f0f0"></div>
<svg class="a" style="left:0;top:0" width="300" height="405"><rect x="153.5" y="391.5" width="34" height="9" fill="#f4f4f4" stroke="#c8c8c8" stroke-width=".7"/><path d="M162 391.5v9M170.5 391.5v9M179 391.5v9" stroke="#c8c8c8" stroke-width=".7"/><path d="M156 394v5" stroke="#111" stroke-width=".9"/><path d="M160.5 394l-3.5 2.5 3.5 2.5z" fill="#111"/><path d="M168 394l-3 2.5 3 2.5z" fill="#111"/><path d="M173.5 394l3 2.5-3 2.5z" fill="#111"/><path d="M181.5 394l3 2.5-3 2.5z" fill="#111"/><path d="M185.5 394v5" stroke="#111" stroke-width=".9"/><path d="M242 401l4-9.5M242.5 391.5l3.5 9.5L271.5 401L275.5 391.5" fill="none" stroke="#444" stroke-width=".7"/><path d="M216 391.5l3 9.5h23" fill="none" stroke="#444" stroke-width=".7"/><path d="M187.5 391.5l4 9.5h21l4-9.5" fill="#fff" stroke="#111" stroke-width=".8"/></svg>
<div class="t" style="left:193px;top:393.5px;font-size:6.1px;font-weight:bold;color:#111">Model</div>
<div class="t" style="left:220.5px;top:393.8px;font-size:5.5px;color:#222">Layout1</div>
<div class="t" style="left:251px;top:393.8px;font-size:5.5px;color:#222">Layout2</div>
<div class="a" style="left:4px;top:399px;width:791px;height:6px;background:#f0f0f0;border-bottom:1px solid #d0d0d0"></div>
<div class="a" style="left:4px;top:402px;width:791px;height:1px;background:#c4c4c4"></div>
<div class="a" style="left:6px;top:405px;width:789px;height:30px;background:#fff;border:1px solid #7a7a7a;border-right:none"></div>
<div class="a" style="left:7px;top:421.5px;width:788px;height:1px;background:#8a8a8a"></div>
<div class="t" style="left:8px;top:406.8px;font-family:'Liberation Mono',monospace;font-size:6.8px;color:#222">Cancel</div>
<div class="t" style="left:9px;top:424.5px;font-family:'Liberation Mono',monospace;font-size:6.8px;color:#222">:</div>
<div class="a" style="left:785px;top:406px;width:10px;height:15.5px;background:#f4f4f4;border-left:1px solid #e0e0e0"></div>
<div class="t" style="left:787.5px;top:407.5px;font-size:4.5px;color:#444">&#x25B2;</div>
<div class="t" style="left:787.5px;top:415px;font-size:4.5px;color:#444">&#x25BC;</div>
<div class="a" style="left:4px;top:435px;width:791px;height:12px;background:#f0f0f0;border-top:1px solid #d8d8d8"></div>
<div class="t" style="left:6px;top:438px;font-size:6.6px;color:#111">IDEA 10NG Level1</div>
<div class="a" style="left:466px;top:437px;width:100px;height:9px;border:1px solid #d0d0d0;border-right-color:#fff;border-bottom-color:#fff"></div>
<div class="t" style="left:469px;top:438.6px;font-size:5.8px;color:#111">17.23,14.97,0.00</div>
<div class="a" style="left:567.5px;top:437px;width:17px;height:9px;border:1px solid #d8d8d8;border-right-color:#fff;border-bottom-color:#fff;background:#f0f0f0"></div>
<div class="t" style="left:567.5px;width:17px;text-align:center;top:438.6px;font-size:5.6px;color:#a8a8a8;">SNAP</div>
<div class="a" style="left:587px;top:437px;width:15px;height:9px;border:1px solid #d8d8d8;border-right-color:#fff;border-bottom-color:#fff;background:#f0f0f0"></div>
<div class="t" style="left:587px;width:15px;text-align:center;top:438.6px;font-size:5.6px;color:#a8a8a8;">GRID</div>
<div class="a" style="left:604px;top:437px;width:26px;height:9px;border:1px solid #d8d8d8;border-right-color:#fff;border-bottom-color:#fff;background:#f0f0f0"></div>
<div class="t" style="left:604px;width:26px;text-align:center;top:438.6px;font-size:5.6px;color:#a8a8a8;">ORTHO</div>
<div class="a" style="left:630.5px;top:437px;width:22px;height:9px;border:1px solid #d8d8d8;border-right-color:#fff;border-bottom-color:#fff;background:#f0f0f0"></div>
<div class="t" style="left:630.5px;width:22px;text-align:center;top:438.6px;font-size:5.6px;color:#111;">POLAR</div>
<div class="a" style="left:653.5px;top:437px;width:23px;height:9px;border:1px solid #d8d8d8;border-right-color:#fff;border-bottom-color:#fff;background:#f0f0f0"></div>
<div class="t" style="left:653.5px;width:23px;text-align:center;top:438.6px;font-size:5.6px;color:#a8a8a8;">ESNAP</div>
<div class="a" style="left:677px;top:437px;width:27px;height:9px;border:1px solid #d8d8d8;border-right-color:#fff;border-bottom-color:#fff;background:#f0f0f0"></div>
<div class="t" style="left:677px;width:27px;text-align:center;top:438.6px;font-size:5.6px;color:#111;">ETRACK</div>
<div class="a" style="left:704.5px;top:437px;width:14px;height:9px;border:1px solid #d8d8d8;border-right-color:#fff;border-bottom-color:#fff;background:#f0f0f0"></div>
<div class="t" style="left:704.5px;width:14px;text-align:center;top:438.6px;font-size:5.6px;color:#a8a8a8;">LWT</div>
<div class="a" style="left:719px;top:437px;width:25px;height:9px;border:1px solid #d8d8d8;border-right-color:#fff;border-bottom-color:#fff;background:#f0f0f0"></div>
<div class="t" style="left:719px;width:25px;text-align:center;top:438.6px;font-size:5.6px;color:#111;">MODEL</div>
<div class="a" style="left:745px;top:437px;width:25px;height:9px;border:1px solid #d8d8d8;border-right-color:#fff;border-bottom-color:#fff;background:#f0f0f0"></div>
<div class="t" style="left:745px;width:25px;text-align:center;top:438.6px;font-size:5.6px;color:#a8a8a8;">TABLET</div>
<div class="a" style="left:771px;top:437px;width:24px;height:9px;border:1px solid #d8d8d8;border-right-color:#fff;border-bottom-color:#fff;background:#f0f0f0"></div>
<div class="t" style="left:771px;width:24px;text-align:center;top:438.6px;font-size:5.6px;color:#111;">DYN</div>
<div class="a" style="left:0;top:447px;width:800px;height:3px;background:#3a5a8a"></div>
<div class="a" style="left:60px;top:447px;width:62px;height:3px;background:#8aa0be"></div>
<div class="a" style="left:128px;top:447px;width:62px;height:3px;background:#8aa0be"></div>
<div class="a" style="left:192px;top:447px;width:62px;height:3px;background:#8aa0be"></div>
<div class="a" style="left:256px;top:447px;width:62px;height:3px;background:#8aa0be"></div>
<div class="a" style="left:320px;top:447px;width:62px;height:3px;background:#8aa0be"></div>
<div class="a" style="left:384px;top:447px;width:62px;height:3px;background:#8aa0be"></div>
<svg class="a" style="left:0;top:0" width="800" height="450" viewBox="0 0 800 450"><defs><clipPath id="dc"><rect x="153" y="72" width="642" height="319"/></clipPath></defs><rect x="153" y="72" width="642" height="319" fill="#000"/><g clip-path="url(#dc)"><rect x="320" y="73" width="15" height="6" fill="none" stroke="#c8c828" stroke-width="1"/><ellipse cx="327.5" cy="86" rx="5.5" ry="6.5" fill="none" stroke="#c8c828" stroke-width="1"/><ellipse cx="327.5" cy="166" rx="5.5" ry="6.5" fill="none" stroke="#c8c828" stroke-width="1"/><rect x="320" y="173" width="15" height="5.5" fill="none" stroke="#c8c828" stroke-width="1"/><path d="M342.5,72 L342.5,96.5 L324,96.5" fill="none" stroke="#a8683a" stroke-width="1" /><path d="M414.5,72 L414.5,97 L393,97" fill="none" stroke="#a8683a" stroke-width="1" /><path d="M344,72 L344,96" fill="none" stroke="#a8683a" stroke-width="0.6" /><rect x="357" y="74" width="22" height="21" fill="none" stroke="#a8683a" stroke-width="1"/><rect x="356" y="73" width="20" height="19" fill="none" stroke="#22c022" stroke-width="1.3"/><path d="M356,73 L376,92" fill="none" stroke="#22c022" stroke-width="0.8" /><path d="M376,73 L356,92" fill="none" stroke="#22c022" stroke-width="0.8" /><circle cx="366" cy="82.5" r="1.5" fill="none" stroke="#22c022" stroke-width=".7"/><rect x="392" y="74" width="22" height="21" fill="none" stroke="#a8683a" stroke-width="1"/><rect x="391" y="73" width="20" height="19" fill="none" stroke="#22c022" stroke-width="1.3"/><path d="M391,73 L411,92" fill="none" stroke="#22c022" stroke-width="0.8" /><path d="M411,73 L391,92" fill="none" stroke="#22c022" stroke-width="0.8" /><circle cx="401" cy="82.5" r="1.5" fill="none" stroke="#22c022" stroke-width=".7"/><rect x="357" y="160" width="22" height="21" fill="none" stroke="#a8683a" stroke-width="1"/><rect x="356" y="159" width="20" height="19" fill="none" stroke="#22c022" stroke-width="1.3"/><path d="M356,159 L376,178" fill="none" stroke="#22c022" stroke-width="0.8" /><path d="M376,159 L356,178" fill="none" stroke="#22c022" stroke-width="0.8" /><circle cx="366" cy="168.5" r="1.5" fill="none" stroke="#22c022" stroke-width=".7"/><rect x="392" y="160" width="22" height="21" fill="none" stroke="#a8683a" stroke-width="1"/><rect x="391" y="159" width="20" height="19" fill="none" stroke="#22c022" stroke-width="1.3"/><path d="M391,159 L411,178" fill="none" stroke="#22c022" stroke-width="0.8" /><path d="M411,159 L391,178" fill="none" stroke="#22c022" stroke-width="0.8" /><circle cx="401" cy="168.5" r="1.5" fill="none" stroke="#22c022" stroke-width=".7"/><circle cx="334.5" cy="105" r="5.8" fill="#05054a" stroke="#1010a0" stroke-width="1.1"/><rect x="331.3" y="101.2" width="6.4" height="2.4" fill="#2a2aff"/><rect x="331.3" y="106.6" width="6.4" height="2.2" fill="#2a2aff"/><circle cx="404.5" cy="105" r="5.8" fill="#05054a" stroke="#1010a0" stroke-width="1.1"/><rect x="401.3" y="101.2" width="6.4" height="2.4" fill="#2a2aff"/><rect x="401.3" y="106.6" width="6.4" height="2.2" fill="#2a2aff"/><path d="M324,97 A18,18 0 0 0 341,115" fill="none" stroke="#1a9a1a" stroke-width="1.1" stroke-dasharray="4 1"/><path d="M393,97 A18,18 0 0 0 411,115" fill="none" stroke="#1a9a1a" stroke-width="1.1" stroke-dasharray="4 1"/><rect x="343" y="116" width="70" height="10" fill="none" stroke="#a8683a" stroke-width="1"/><path d="M343,116.5 L411,116.5" fill="none" stroke="#a8a8a8" stroke-width="1.2" /><rect x="343" y="127" width="70" height="10" fill="none" stroke="#a8683a" stroke-width="1"/><path d="M343,136.5 L411,136.5" fill="none" stroke="#a8a8a8" stroke-width="1.2" /><path d="M318,126 L414,126" fill="none" stroke="#a8683a" stroke-width="1" /><rect x="322" y="115" width="12" height="10" fill="none" stroke="#22c022" stroke-width="1.2"/><rect x="322" y="128" width="12" height="9" fill="none" stroke="#22c022" stroke-width="1.2"/><circle cx="328" cy="123" r="1.5" fill="none" stroke="#22c022" stroke-width=".7"/><circle cx="328" cy="130" r="1.5" fill="none" stroke="#22c022" stroke-width=".7"/><circle cx="334.5" cy="147.5" r="5.8" fill="#05054a" stroke="#1010a0" stroke-width="1.1"/><rect x="331.3" y="143.7" width="6.4" height="2.4" fill="#2a2aff"/><rect x="331.3" y="149.1" width="6.4" height="2.2" fill="#2a2aff"/><circle cx="404.5" cy="147.5" r="5.8" fill="#05054a" stroke="#1010a0" stroke-width="1.1"/><rect x="401.3" y="143.7" width="6.4" height="2.4" fill="#2a2aff"/><rect x="401.3" y="149.1" width="6.4" height="2.2" fill="#2a2aff"/><path d="M324,155 A18,18 0 0 1 342,138" fill="none" stroke="#1a9a1a" stroke-width="1.1" stroke-dasharray="4 1"/><path d="M393,155 A18,18 0 0 1 411,138" fill="none" stroke="#1a9a1a" stroke-width="1.1" stroke-dasharray="4 1"/><path d="M323,155.5 L342.5,155.5 L342.5,179" fill="none" stroke="#a8683a" stroke-width="1" /><path d="M393,155.5 L414.5,155.5 L414.5,179" fill="none" stroke="#a8683a" stroke-width="1" /><path d="M320,178.5 L413,178.5" fill="none" stroke="#a8683a" stroke-width="1" /><path d="M318,185.5 L410.5,185.5 L410.5,226" fill="none" stroke="#a8683a" stroke-width="1" /><path d="M414,185.5 L494,185.5" fill="none" stroke="#a8683a" stroke-width="1" /><path d="M414,185.5 L414,227 L411,227" fill="none" stroke="#a8683a" stroke-width="1" /><rect x="414" y="168" width="74" height="11" fill="none" stroke="#c8c828" stroke-width="1.1"/><path d="M414,179 L423.5,168" fill="none" stroke="#c8c828" stroke-width="0.8" /><path d="M423.5,168 L423.5,179" fill="none" stroke="#c8c828" stroke-width="1" /><path d="M423.5,179 L433,168" fill="none" stroke="#c8c828" stroke-width="0.8" /><path d="M433,168 L433,179" fill="none" stroke="#c8c828" stroke-width="1" /><path d="M433,179 L442,168" fill="none" stroke="#c8c828" stroke-width="0.8" /><path d="M442,168 L442,179" fill="none" stroke="#c8c828" stroke-width="1" /><path d="M442,179 L451.5,168" fill="none" stroke="#c8c828" stroke-width="0.8" /><path d="M451.5,168 L451.5,179" fill="none" stroke="#c8c828" stroke-width="1" /><path d="M451.5,179 L461,168" fill="none" stroke="#c8c828" stroke-width="0.8" /><path d="M461,168 L461,179" fill="none" stroke="#c8c828" stroke-width="1" /><path d="M461,179 L470,168" fill="none" stroke="#c8c828" stroke-width="0.8" /><path d="M470,168 L470,179" fill="none" stroke="#c8c828" stroke-width="1" /><path d="M470,179 L479,168" fill="none" stroke="#c8c828" stroke-width="0.8" /><path d="M479,168 L479,179" fill="none" stroke="#c8c828" stroke-width="1" /><path d="M479,179 L488,168" fill="none" stroke="#c8c828" stroke-width="0.8" /><path d="M339,250.5 V211 H362.5 V250.5" fill="none" stroke="#c8c828" stroke-width="1"/><rect x="330" y="226" width="9" height="10" fill="none" stroke="#c8c828" stroke-width="1"/><path d="M333,227 L333,235" fill="none" stroke="#c8c828" stroke-width="0.7" /><text x="367" y="221.5" font-family="Liberation Sans" font-weight="bold" font-size="6.2" fill="#1a1aff">MANAGER</text><path d="M393,244 A17,17 0 0 1 410,227" fill="none" stroke="#1a9a1a" stroke-width="1.1" stroke-dasharray="4 1"/><circle cx="404" cy="236" r="5.8" fill="#05054a" stroke="#1010a0" stroke-width="1.1"/><rect x="400.8" y="232.2" width="6.4" height="2.4" fill="#2a2aff"/><rect x="400.8" y="237.6" width="6.4" height="2.2" fill="#2a2aff"/><path d="M393,244 L413,244" fill="none" stroke="#a8683a" stroke-width="1.2" /><path d="M410.5,244 L410.5,266" fill="none" stroke="#a8683a" stroke-width="1" /><path d="M414,244 L414,266" fill="none" stroke="#a8683a" stroke-width="1" /><rect x="318" y="251" width="92" height="15" fill="none" stroke="#c8c828" stroke-width="1.1"/><path d="M318,266 L346,251" fill="none" stroke="#c8c828" stroke-width="0.8" /><path d="M346,251 L346,266" fill="none" stroke="#c8c828" stroke-width="1" /><path d="M346,266 L378,251" fill="none" stroke="#c8c828" stroke-width="0.8" /><path d="M378,251 L378,266" fill="none" stroke="#c8c828" stroke-width="1" /><path d="M378,266 L410,251" fill="none" stroke="#c8c828" stroke-width="0.8" /><rect x="414" y="251" width="74" height="15.5" fill="none" stroke="#c8c828" stroke-width="1.1"/><path d="M414,266.5 L438,251" fill="none" stroke="#c8c828" stroke-width="0.8" /><path d="M438,251 L438,266.5" fill="none" stroke="#c8c828" stroke-width="1" /><path d="M438,266.5 L463,251" fill="none" stroke="#c8c828" stroke-width="0.8" /><path d="M463,251 L463,266.5" fill="none" stroke="#c8c828" stroke-width="1" /><path d="M463,266.5 L488,251" fill="none" stroke="#c8c828" stroke-width="0.8" /><path d="M153,272.5 L488,272.5" fill="none" stroke="#a020a8" stroke-width="1.2" /><rect x="447" y="201" width="41" height="24.5" fill="none" stroke="#c8c828" stroke-width="1"/><rect x="461" y="193" width="12" height="8" fill="none" stroke="#c8c828" stroke-width="1"/><rect x="463" y="191" width="8" height="2.5" fill="none" stroke="#c8c828" stroke-width="0.7"/><text x="430" y="234.5" font-family="Liberation Sans" font-weight="bold" font-size="6.2" fill="#1a1aff">OFFICE</text><path d="M488,185.5 L488,227 L494,227" fill="none" stroke="#a8683a" stroke-width="1" /><path d="M494,165 L494,227" fill="none" stroke="#a8683a" stroke-width="1" /><path d="M472,244 A17,17 0 0 1 488,227" fill="none" stroke="#1a9a1a" stroke-width="1.1" stroke-dasharray="4 1"/><circle cx="484" cy="236" r="5.8" fill="#05054a" stroke="#1010a0" stroke-width="1.1"/><rect x="480.8" y="232.2" width="6.4" height="2.4" fill="#2a2aff"/><rect x="480.8" y="237.6" width="6.4" height="2.2" fill="#2a2aff"/><path d="M472,244 L488.5,244 L488.5,266" fill="none" stroke="#a8683a" stroke-width="1.1" /><path d="M494,244 L494,266.5 L539,266.5 L539,272 L494,272" fill="none" stroke="#a8683a" stroke-width="1" /><path d="M487.5,72 L487.5,145" fill="none" stroke="#a8683a" stroke-width="1" /><path d="M493.5,72 L493.5,145" fill="none" stroke="#a8683a" stroke-width="1" /><path d="M430,73 L487,73" fill="none" stroke="#a8683a" stroke-width="1" /><path d="M494,72.5 L590,72.5" fill="none" stroke="#3a6a2a" stroke-width="1" /><rect x="-6" y="-6" width="12" height="12" rx="3" transform="translate(510.5,88.5) rotate(-40)" fill="none" stroke="#c8c828" stroke-width="1"/><path d="M502,88 L510.5,79" fill="none" stroke="#c8c828" stroke-width="1.6"/><path d="M494,134 H505 C512,134 515,130 515,122 V110 C515,98 522,92.2 532,92.2 H555.5 A5.4,5.4 0 0 1 555.5,103 H537 C529,103 524.5,108 524.5,117 V127 C524.5,138 517,144.2 506,144.2 H494" fill="none" stroke="#a020a8" stroke-width="1.1"/><text x="549" y="135.5" font-family="Liberation Sans" font-weight="bold" font-size="6.2" fill="#1a1aff">SPA - GYM</text><text x="549" y="143" font-family="Liberation Sans" font-weight="bold" font-size="6.2" fill="#1a1aff">RECEPTION</text><path d="M470,165 A23,23 0 0 1 493,145" fill="none" stroke="#1a9a1a" stroke-width="1.1" stroke-dasharray="4 1"/><circle cx="484" cy="158" r="5.8" fill="#05054a" stroke="#1010a0" stroke-width="1.1"/><rect x="480.8" y="154.2" width="6.4" height="2.4" fill="#2a2aff"/><rect x="480.8" y="159.6" width="6.4" height="2.2" fill="#2a2aff"/><path d="M470,165 L494,165" fill="none" stroke="#a8683a" stroke-width="1" /><rect x="447" y="201" width="41" height="24.5" fill="none" stroke="#c8c828" stroke-width="1"/><rect x="494" y="179" width="49" height="5.5" fill="none" stroke="#c8d870" stroke-width="0.8"/><path d="M494,182 L543,182" fill="none" stroke="#80e8b8" stroke-width="1.3" /><path d="M543,179 L543,207" fill="none" stroke="#c8d870" stroke-width="0.8" /><path d="M544.5,184 L544.5,207" fill="none" stroke="#80e8b8" stroke-width="1.2" /><path d="M567,184 A24,23 0 0 1 543,207" fill="none" stroke="#1a9a1a" stroke-width="1" stroke-dasharray="3 1.5"/><path d="M567,184 A24,23 0 0 0 591,207" fill="none" stroke="#1a9a1a" stroke-width="1" stroke-dasharray="3 1.5"/><circle cx="567" cy="204" r="5.8" fill="#05054a" stroke="#1010a0" stroke-width="1.1"/><rect x="563.8" y="200.2" width="6.4" height="2.4" fill="#2a2aff"/><rect x="563.8" y="205.6" width="6.4" height="2.2" fill="#2a2aff"/><path d="M641.5,72 L641.5,184" fill="none" stroke="#a8683a" stroke-width="1" /><path d="M648,72 L648,184" fill="none" stroke="#a8683a" stroke-width="1" /><path d="M646,98.5 L642,98.5 L642,148 L646,148" fill="none" stroke="#c8e070" stroke-width="1" /><path d="M648.5,98 L648.5,148" fill="none" stroke="#a020a8" stroke-width="1.2" /><path d="M648,99 L670,99" fill="none" stroke="#80e8b8" stroke-width="1.3" /><path d="M648,147.5 L670,147.5" fill="none" stroke="#80e8b8" stroke-width="1.3" /><path d="M670,103 Q668,118 651,123 Q668,128 670,143" fill="none" stroke="#1a9a1a" stroke-width="1" stroke-dasharray="2 1"/><circle cx="666" cy="123" r="5.8" fill="#05054a" stroke="#1010a0" stroke-width="1.1"/><rect x="662.8" y="119.2" width="6.4" height="2.4" fill="#2a2aff"/><rect x="662.8" y="124.6" width="6.4" height="2.2" fill="#2a2aff"/><rect x="592" y="179" width="50" height="6" fill="none" stroke="#c8d870" stroke-width="0.8"/><path d="M592,182.5 L642,182.5" fill="none" stroke="#80e8b8" stroke-width="1.3" /><path d="M592.5,184 L592.5,207.5" fill="none" stroke="#80e8b8" stroke-width="1.2" /><path d="M643,185 L643,369" fill="none" stroke="#c8d870" stroke-width="0.8" /><path d="M645,185 L645,370" fill="none" stroke="#80e8b8" stroke-width="1.4" /><path d="M592,207.5 L586,205" fill="none" stroke="#1a9a1a" stroke-width="1" /><path d="M678.5,338.5 L678.5,175 L800,175" fill="none" stroke="#a020a8" stroke-width="1.2" /><path d="M678.5,338.5 L800,338.5" fill="none" stroke="#a020a8" stroke-width="1.2" /><path d="M648,185 L648,368.5 L800,368.5" fill="none" stroke="#a020a8" stroke-width="1.2" /><rect x="592" y="274" width="13.5" height="101.5" fill="none" stroke="#a020a8" stroke-width="1.2"/><path d="M648,372 L800,372" fill="none" stroke="#80e8b8" stroke-width="1.5" /><path d="M648,375.5 L800,375.5" fill="none" stroke="#c8d870" stroke-width="0.8" /><path d="M648,380 L800,380" fill="none" stroke="#4a7a3a" stroke-width="1" /><text x="785" y="256.5" font-family="Liberation Sans" font-weight="bold" font-size="6" fill="#1a1aff">WC</text><path d="M612,297 h11 q3,5 0,11 h-11 q-3,-5 0,-11z" fill="none" stroke="#c8c828" stroke-width="1"/><path d="M757,324 L757,352 L785,352" fill="none" stroke="#b0b0b0" stroke-width="1" /><rect x="757" y="341" width="11" height="11" fill="none" stroke="#20b020" stroke-width="1"/><text x="758.5" y="350" font-family="Liberation Sans" font-size="7.5" fill="#fff">W</text><text x="752.5" y="321" font-family="Liberation Sans" font-size="7.5" fill="#20b020">Y</text><text x="787" y="355" font-family="Liberation Sans" font-size="7.5" fill="#e02020">X</text><path d="M753,354 L760,354" fill="none" stroke="#2040e0" stroke-width="1.5" /><path d="M756,351 L756,356" fill="none" stroke="#e02020" stroke-width="1" /><rect x="592.5" y="376" width="103" height="15" fill="none" stroke="#a8683a" stroke-width="1"/><rect x="595.5" y="378.5" width="45" height="13" fill="none" stroke="#a8683a" stroke-width="0.8"/><rect x="650.5" y="378.5" width="42" height="13" fill="none" stroke="#a8683a" stroke-width="0.8"/><rect x="642" y="368" width="6" height="23" fill="#000" stroke="#a8683a" stroke-width="1"/><path d="M607,390 L618.0,389.4" stroke="#22d022" stroke-width="1.1"/><path d="M607,390 L614.2,387.5" stroke="#22d022" stroke-width="1.1"/><path d="M607,390 L615.6,383.8" stroke="#22d022" stroke-width="1.1"/><path d="M607,390 L611.4,384.2" stroke="#22d022" stroke-width="1.1"/><path d="M607,390 L610.3,380.5" stroke="#22d022" stroke-width="1.1"/><path d="M607,390 L607.0,383.0" stroke="#22d022" stroke-width="1.1"/><path d="M607,390 L603.7,380.5" stroke="#22d022" stroke-width="1.1"/><path d="M607,390 L602.6,384.2" stroke="#22d022" stroke-width="1.1"/><path d="M607,390 L598.4,383.8" stroke="#22d022" stroke-width="1.1"/><path d="M607,390 L599.8,387.5" stroke="#22d022" stroke-width="1.1"/><path d="M607,390 L596.0,389.4" stroke="#22d022" stroke-width="1.1"/><path d="M628,390 L639.0,389.4" stroke="#22d022" stroke-width="1.1"/><path d="M628,390 L635.2,387.5" stroke="#22d022" stroke-width="1.1"/><path d="M628,390 L636.6,383.8" stroke="#22d022" stroke-width="1.1"/><path d="M628,390 L632.4,384.2" stroke="#22d022" stroke-width="1.1"/><path d="M628,390 L631.3,380.5" stroke="#22d022" stroke-width="1.1"/><path d="M628,390 L628.0,383.0" stroke="#22d022" stroke-width="1.1"/><path d="M628,390 L624.7,380.5" stroke="#22d022" stroke-width="1.1"/><path d="M628,390 L623.6,384.2" stroke="#22d022" stroke-width="1.1"/><path d="M628,390 L619.4,383.8" stroke="#22d022" stroke-width="1.1"/><path d="M628,390 L620.8,387.5" stroke="#22d022" stroke-width="1.1"/><path d="M628,390 L617.0,389.4" stroke="#22d022" stroke-width="1.1"/><path d="M661,390 L672.0,389.4" stroke="#22d022" stroke-width="1.1"/><path d="M661,390 L668.2,387.5" stroke="#22d022" stroke-width="1.1"/><path d="M661,390 L669.6,383.8" stroke="#22d022" stroke-width="1.1"/><path d="M661,390 L665.4,384.2" stroke="#22d022" stroke-width="1.1"/><path d="M661,390 L664.3,380.5" stroke="#22d022" stroke-width="1.1"/><path d="M661,390 L661.0,383.0" stroke="#22d022" stroke-width="1.1"/><path d="M661,390 L657.7,380.5" stroke="#22d022" stroke-width="1.1"/><path d="M661,390 L656.6,384.2" stroke="#22d022" stroke-width="1.1"/><path d="M661,390 L652.4,383.8" stroke="#22d022" stroke-width="1.1"/><path d="M661,390 L653.8,387.5" stroke="#22d022" stroke-width="1.1"/><path d="M661,390 L650.0,389.4" stroke="#22d022" stroke-width="1.1"/><path d="M682,390 L693.0,389.4" stroke="#22d022" stroke-width="1.1"/><path d="M682,390 L689.2,387.5" stroke="#22d022" stroke-width="1.1"/><path d="M682,390 L690.6,383.8" stroke="#22d022" stroke-width="1.1"/><path d="M682,390 L686.4,384.2" stroke="#22d022" stroke-width="1.1"/><path d="M682,390 L685.3,380.5" stroke="#22d022" stroke-width="1.1"/><path d="M682,390 L682.0,383.0" stroke="#22d022" stroke-width="1.1"/><path d="M682,390 L678.7,380.5" stroke="#22d022" stroke-width="1.1"/><path d="M682,390 L677.6,384.2" stroke="#22d022" stroke-width="1.1"/><path d="M682,390 L673.4,383.8" stroke="#22d022" stroke-width="1.1"/><path d="M682,390 L674.8,387.5" stroke="#22d022" stroke-width="1.1"/><path d="M682,390 L671.0,389.4" stroke="#22d022" stroke-width="1.1"/><rect x="701" y="381.5" width="23" height="9.5" fill="none" stroke="#d8d8d8" stroke-width="0.9"/><path d="M710,384.5 L722,384.5 L722,391" fill="none" stroke="#d8d8d8" stroke-width="0.7" /><path d="M704.0,384.5 L704.0,391" fill="none" stroke="#d8d8d8" stroke-width="0.7" /><path d="M706.5,384.5 L706.5,391" fill="none" stroke="#d8d8d8" stroke-width="0.7" /><path d="M709.0,384.5 L709.0,391" fill="none" stroke="#d8d8d8" stroke-width="0.7" /><rect x="762" y="381.5" width="23" height="9.5" fill="none" stroke="#d8d8d8" stroke-width="0.9"/><path d="M771,384.5 L783,384.5 L783,391" fill="none" stroke="#d8d8d8" stroke-width="0.7" /><path d="M765.0,384.5 L765.0,391" fill="none" stroke="#d8d8d8" stroke-width="0.7" /><path d="M767.5,384.5 L767.5,391" fill="none" stroke="#d8d8d8" stroke-width="0.7" /><path d="M770.0,384.5 L770.0,391" fill="none" stroke="#d8d8d8" stroke-width="0.7" /><rect x="787" y="381.5" width="10" height="9.5" fill="none" stroke="#d8d8d8" stroke-width="0.9"/><path d="M789.0,384.5 L789.0,391" fill="none" stroke="#d8d8d8" stroke-width="0.7" /><path d="M791.5,384.5 L791.5,391" fill="none" stroke="#d8d8d8" stroke-width="0.7" /><path d="M794.0,384.5 L794.0,391" fill="none" stroke="#d8d8d8" stroke-width="0.7" /><path d="M487,272.5 L487,391" fill="none" stroke="#a020a8" stroke-width="1" /><path d="M488.5,273 L488.5,311" fill="none" stroke="#80e8b8" stroke-width="1.2" /><path d="M492.5,273 L492.5,311" fill="none" stroke="#80e8b8" stroke-width="1.2" /><path d="M488.5,362 L488.5,391" fill="none" stroke="#80e8b8" stroke-width="1.2" /><path d="M492.5,362 L492.5,391" fill="none" stroke="#80e8b8" stroke-width="1.2" /><path d="M466,313.5 H490 M466,361.5 H490" stroke="#e0e0e0" stroke-width="1" stroke-dasharray="1.5 1"/><path d="M466,314 L477,330 M466,361 L477,345" stroke="#c8c8c8" stroke-width=".8" stroke-dasharray="1 1.5"/><path d="M484,322 L484,353" fill="none" stroke="#20c020" stroke-width="1" /><path d="M468,337.5 L501,337.5" fill="none" stroke="#e02020" stroke-width="1" /><rect x="486" y="336" width="3" height="3" fill="#e0a0a0"/><circle cx="462" cy="338" r="6" fill="#05054a" stroke="#1010a0" stroke-width="1.1"/><rect x="458.8" y="334.2" width="6.4" height="2.4" fill="#2a2aff"/><rect x="458.8" y="339.6" width="6.4" height="2.2" fill="#2a2aff"/><rect x="488" y="309" width="4" height="4" fill="#2040ff"/><rect x="488" y="360" width="4" height="4" fill="#2040ff"/><text x="538" y="334.5" font-family="Liberation Sans" font-weight="bold" font-size="6" fill="#1a1aff">RECEPTION</text></g></svg>
<div class="a" style="left:41px;top:52px;width:278px;height:233px;background:linear-gradient(180deg,rgba(0,0,0,0) 10px,rgba(0,0,0,0) 11px),linear-gradient(90deg,#4f80c8,#6292d8 40%,#5a8ad2 70%,#6494d6);border:1px solid #3a4a66;border-radius:3px 3px 0 0"></div>
<div class="a" style="left:42px;top:62px;width:276px;height:222px;background:linear-gradient(90deg,#4468a8,#5474b0 50%,#8aa2cc 97%,#b4c4de)"></div>
<div class="a" style="left:42px;top:53px;width:275px;height:9px;background:linear-gradient(180deg,rgba(255,255,255,.25),rgba(255,255,255,0))"></div>
<div class="t" style="left:44.5px;top:55px;font-size:5px;color:#1a2a40">Door</div>
<div class="a" style="left:300px;top:52.5px;width:16px;height:6.5px;background:linear-gradient(180deg,#e8a898,#c84a38 55%,#d06050);border:1px solid #7a3a30;border-top:none;border-radius:0 0 2px 2px"></div>
<div class="t" style="left:306px;top:52.5px;font-size:5.5px;color:#fff;font-weight:bold">&#x2715;</div>
<div class="a" style="left:44.3px;top:62.3px;width:271.5px;height:219.5px;background:#f0f0f0;border:1px solid #f8f8f8;border-right-color:#dcdcdc"></div>
<div class="t" style="left:47px;top:65.40px;font-size:4.5px;color:#222;">Type</div>
<div class="a" style="left:63px;top:64px;width:50.5px;height:7.5px;background:#fff;border:1px solid #b4b4b4"></div>
<div class="t" style="left:65px;top:66.55px;font-size:4.5px;color:#222;">Door</div>
<div class="a" style="left:107.5px;top:65px;width:5px;height:5.5px;background:#f4f4f4;border-left:1px solid #ddd"></div>
<div class="a" style="left:108.5px;top:66.95px;border-left:1.6px solid transparent;border-right:1.6px solid transparent;border-top:2px solid #111"></div>
<div class="a" style="left:46.5px;top:74px;width:53px;height:10.5px;background:#f0f0f0;border-right:1px solid #6a6a6a;border-bottom:1px solid #6a6a6a;box-shadow:inset 1px 1px 0 #fff,inset -1px -1px 0 #a8a8a8"></div>
<div class="t" style="left:46.5px;width:53px;text-align:center;top:78.05px;font-size:4.5px;color:#222">Type...</div>
<div class="t" style="left:107.5px;top:78.80px;font-size:4.5px;color:#222;">All</div>
<div class="a" style="left:47px;top:93px;width:72px;height:35px;border:1px solid #d6d6d6;box-shadow:inset 1px 1px 0 #fff"></div>
<div class="t" style="left:49px;top:91.80px;padding:0 1px;background:#f0f0f0;font-size:4.5px;color:#222">Attributes</div>
<div class="t" style="left:50px;top:98.50px;font-size:4.5px;color:#222;">Coefficient U :</div>
<div class="t" style="left:104px;top:98.50px;font-size:4.5px;color:#222;">4.5</div>
<div class="t" style="left:50px;top:105.20px;font-size:4.5px;color:#222;">Glass coefficient :</div>
<div class="t" style="left:105px;top:105.20px;font-size:4.5px;color:#222;">1</div>
<div class="t" style="left:50px;top:112.00px;font-size:4.5px;color:#222;">Frame Type :</div>
<div class="t" style="left:105px;top:112.00px;font-size:4.5px;color:#222;">1</div>
<div class="t" style="left:50px;top:119.00px;font-size:4.5px;color:#222;">Cost (&#8364;)</div>
<div class="t" style="left:47px;top:139.30px;font-size:4.5px;color:#222;">Height :</div>
<div class="a" style="left:92px;top:136.5px;width:28px;height:8px;background:#fff;border:1px solid #a8a8a8"></div>
<div class="t" style="left:93.5px;top:139.30px;font-size:4.5px;color:#222;">3.00</div>
<svg class="a" style="left:59.0px;top:147.8px" width="5" height="5"><path d="M0.7 4.2V0.7H4" fill="none" stroke="#707070" stroke-width=".8"/><path d="M1.1 2l1.1 1.4 1.8-2.3" fill="none" stroke="#333" stroke-width="1"/></svg>
<div class="t" style="left:65.5px;top:148.80px;font-size:4.5px;color:#222;">Top</div>
<div class="a" style="left:92px;top:146px;width:28px;height:8px;background:#fff;border:1px solid #a8a8a8"></div>
<div class="t" style="left:93.5px;top:148.80px;font-size:4.5px;color:#222;">0.70</div>
<div class="t" style="left:47px;top:158.80px;font-size:4.5px;color:#222;">Proposed Rise : 0.60</div>
<div class="t" style="left:47px;top:166.80px;font-size:4.5px;color:#222;">Rise :</div>
<div class="a" style="left:92px;top:164px;width:28px;height:8px;background:#fff;border:1px solid #a8a8a8"></div>
<div class="t" style="left:93.5px;top:166.80px;font-size:4.5px;color:#222;">0.00</div>
<div class="t" style="left:47px;top:176.40px;font-size:4.5px;color:#222;">Length :</div>
<div class="a" style="left:92px;top:173.5px;width:28px;height:8px;background:#fff;border:1px solid #a8a8a8"></div>
<div class="t" style="left:93.5px;top:176.40px;font-size:4.5px;color:#222;">2.00</div>
<div class="t" style="left:47px;top:184.80px;font-size:4.5px;color:#222;">Proposed Length : 1.76</div>
<div class="a" style="left:47px;top:196px;width:72px;height:26.5px;border:1px solid #d6d6d6;box-shadow:inset 1px 1px 0 #fff"></div>
<svg class="a" style="left:60.5px;top:203.4px" width="5" height="5"><path d="M0.7 4.2V0.7H4" fill="none" stroke="#707070" stroke-width=".8"/><path d="M1.1 2l1.1 1.4 1.8-2.3" fill="none" stroke="#333" stroke-width="1"/></svg>
<div class="t" style="left:66.5px;top:204.40px;font-size:4.5px;color:#222;">Turn X</div>
<svg class="a" style="left:60.5px;top:214.4px" width="5" height="5"><path d="M0.8 4.2V0.8H4" fill="none" stroke="#707070" stroke-width=".8"/></svg>
<div class="t" style="left:66.5px;top:215.40px;font-size:4.5px;color:#222;">Turn Y</div>
<svg class="a" style="left:57.0px;top:230.4px" width="5" height="5"><path d="M0.7 4.2V0.7H4" fill="none" stroke="#707070" stroke-width=".8"/><path d="M1.1 2l1.1 1.4 1.8-2.3" fill="none" stroke="#333" stroke-width="1"/></svg>
<div class="t" style="left:63.5px;top:231.40px;font-size:4.5px;color:#222;">Draw 2D</div>
<div class="a" style="left:122px;top:66.5px;width:102px;height:111px;border:1px solid #d6d6d6;box-shadow:inset 1px 1px 0 #fff"></div>
<div class="t" style="left:124px;top:65.30px;padding:0 1px;background:#f0f0f0;font-size:4.5px;color:#222">3D Drawing</div>
<div class="t" style="left:125px;top:72.80px;font-size:4.5px;color:#222;">Type</div>
<div class="a" style="left:138px;top:71.5px;width:81.5px;height:7.5px;background:#fff;border:1px solid #b4b4b4"></div>
<div class="t" style="left:140px;top:74.05px;font-size:4.5px;color:#222;">Parametric</div>
<div class="a" style="left:213.5px;top:72.5px;width:5px;height:5.5px;background:#f4f4f4;border-left:1px solid #ddd"></div>
<div class="a" style="left:214.5px;top:74.45px;border-left:1.6px solid transparent;border-right:1.6px solid transparent;border-top:2px solid #111"></div>
<div class="a" style="left:125px;top:81px;width:77px;height:61px;background:#000"></div>
<svg class="a" style="left:125px;top:81px" width="77" height="61"><rect x="25.5" y="7.5" width="25" height="46" fill="none" stroke="#d89030" stroke-width="1.2"/><rect x="27" y="9.5" width="22" height="42.5" fill="none" stroke="#d89030" stroke-width=".9"/><path d="M27 10.5h22" stroke="#1aa090" stroke-width="1.3"/><path d="M27 12.2h22" stroke="#d89030" stroke-width="1"/><path d="M37 12.5v40M39.5 12.5v40" stroke="#d89030" stroke-width="1"/><path d="M28 13v39M48 13v39M38.2 13v39" stroke="#1a8a80" stroke-width=".5"/><path d="M28 52.5h20" stroke="#1a9a90" stroke-width=".7"/><rect x="37" y="31" width="2.5" height="1" fill="#d02020"/></svg>
<div class="t" style="left:125px;top:144.50px;font-size:4.5px;color:#222;">DOOR32</div>
<div class="t" style="left:125px;top:151.50px;font-size:4.5px;color:#222;">2 panels, casement, orthogonal, with glass</div>
<svg class="a" style="left:135.5px;top:156.8px" width="5" height="5"><circle cx="2.3" cy="2.3" r="1.7" fill="#fff" stroke="#606060" stroke-width=".7"/><circle cx="2.3" cy="2.3" r=".9" fill="#222"/></svg>
<div class="t" style="left:141px;top:157.80px;font-size:4.5px;color:#222;">Slide</div>
<svg class="a" style="left:157.5px;top:156.8px" width="5" height="5"><path d="M1 4A1.8 1.8 0 0 1 4 1" fill="none" stroke="#606060" stroke-width=".8"/></svg>
<div class="t" style="left:163px;top:157.80px;font-size:4.5px;color:#222;">Render</div>
<div class="a" style="left:124.5px;top:167.2px;width:29px;height:8.3px;background:#f0f0f0;border-right:1px solid #6a6a6a;border-bottom:1px solid #6a6a6a;box-shadow:inset 1px 1px 0 #fff,inset -1px -1px 0 #a8a8a8"></div>
<div class="t" style="left:124.5px;width:29px;text-align:center;top:170.15px;font-size:4.5px;color:#222">Select...</div>
<div class="a" style="left:181px;top:167.2px;width:37.5px;height:8.3px;background:#f0f0f0;border-right:1px solid #6a6a6a;border-bottom:1px solid #6a6a6a;box-shadow:inset 1px 1px 0 #fff,inset -1px -1px 0 #a8a8a8"></div>
<div class="t" style="left:181px;width:37.5px;text-align:center;top:170.15px;font-size:4.5px;color:#222">Properties...</div>
<div class="a" style="left:227.5px;top:66.5px;width:85px;height:111px;border:1px solid #d6d6d6;box-shadow:inset 1px 1px 0 #fff"></div>
<div class="t" style="left:229.5px;top:65.30px;padding:0 1px;background:#f0f0f0;font-size:4.5px;color:#222">Shutters</div>
<div class="t" style="left:229.5px;top:72.80px;font-size:4.5px;color:#222;">Type</div>
<div class="a" style="left:243px;top:71.5px;width:66px;height:7.5px;background:#fff;border:1px solid #b4b4b4"></div>
<div class="t" style="left:245px;top:74.05px;font-size:4.5px;color:#222;">Does not Exist</div>
<div class="a" style="left:303px;top:72.5px;width:5px;height:5.5px;background:#f4f4f4;border-left:1px solid #ddd"></div>
<div class="a" style="left:304px;top:74.45px;border-left:1.6px solid transparent;border-right:1.6px solid transparent;border-top:2px solid #111"></div>
<div class="a" style="left:229px;top:81px;width:78px;height:61px;background:#000"></div>
<svg class="a" style="left:239.5px;top:156.8px" width="5" height="5"><circle cx="2.3" cy="2.3" r="1.7" fill="#fff" stroke="#c0c0c0" stroke-width=".7"/><circle cx="2.3" cy="2.3" r=".9" fill="#aaa"/></svg>
<div class="t" style="left:245px;top:157.80px;font-size:4.5px;color:#b8b8b8;">Slide</div>
<svg class="a" style="left:262.5px;top:156.8px" width="5" height="5"><path d="M1 4A1.8 1.8 0 0 1 4 1" fill="none" stroke="#c0c0c0" stroke-width=".8"/></svg>
<div class="t" style="left:268px;top:157.80px;font-size:4.5px;color:#b8b8b8;">Render</div>
<div class="a" style="left:229px;top:167.2px;width:29px;height:8.3px;background:#f0f0f0;border-right:1px solid #b0b0b0;border-bottom:1px solid #b0b0b0;box-shadow:inset 1px 1px 0 #fff,inset -1px -1px 0 #d8d8d8"></div>
<div class="t" style="left:229px;width:29px;text-align:center;top:170.15px;font-size:4.5px;color:#b8b8b8">Select...</div>
<div class="a" style="left:271.5px;top:167.2px;width:37px;height:8.3px;background:#f0f0f0;border-right:1px solid #b0b0b0;border-bottom:1px solid #b0b0b0;box-shadow:inset 1px 1px 0 #fff,inset -1px -1px 0 #d8d8d8"></div>
<div class="t" style="left:271.5px;width:37px;text-align:center;top:170.15px;font-size:4.5px;color:#b8b8b8">Properties...</div>
<div class="a" style="left:122px;top:181.5px;width:101px;height:74px;border:1px solid #d6d6d6;box-shadow:inset 1px 1px 0 #fff"></div>
<div class="t" style="left:124px;top:180.30px;padding:0 1px;background:#f0f0f0;font-size:4.5px;color:#222">Alignment</div>
<div class="a" style="left:124.5px;top:189px;width:96px;height:15px;border:1px solid #d6d6d6;box-shadow:inset 1px 1px 0 #fff"></div>
<div class="t" style="left:126.5px;top:187.80px;padding:0 1px;background:#f0f0f0;font-size:4.5px;color:#222">Casing Alignment</div>
<svg class="a" style="left:137.5px;top:193.8px" width="5" height="5"><path d="M1 4A1.8 1.8 0 0 1 4 1" fill="none" stroke="#606060" stroke-width=".8"/></svg>
<div class="t" style="left:143px;top:194.80px;font-size:4.5px;color:#222;">1st Side</div>
<svg class="a" style="left:165.5px;top:193.8px" width="5" height="5"><circle cx="2.3" cy="2.3" r="1.7" fill="#fff" stroke="#606060" stroke-width=".7"/><circle cx="2.3" cy="2.3" r=".9" fill="#222"/></svg>
<div class="t" style="left:171px;top:194.80px;font-size:4.5px;color:#222;">Center</div>
<svg class="a" style="left:191.5px;top:193.8px" width="5" height="5"><path d="M1 4A1.8 1.8 0 0 1 4 1" fill="none" stroke="#606060" stroke-width=".8"/></svg>
<div class="t" style="left:196px;top:194.80px;font-size:4.5px;color:#222;">2nd Side</div>
<div class="t" style="left:125px;top:206.50px;font-size:4.5px;color:#b8b8b8;">Distance of Casing from</div>
<div class="t" style="left:125px;top:214.60px;font-size:4.5px;color:#b8b8b8;">Wall Side</div>
<div class="a" style="left:194px;top:211.5px;width:27px;height:8.5px;background:#f0f0f0;border:1px solid #c8c8c8"></div>
<div class="t" style="left:195.5px;top:214.60px;font-size:4.5px;color:#b8b8b8;">0.19</div>
<div class="a" style="left:124.5px;top:224px;width:96px;height:14.5px;border:1px solid #d6d6d6;box-shadow:inset 1px 1px 0 #fff"></div>
<div class="t" style="left:126.5px;top:222.80px;padding:0 1px;background:#f0f0f0;font-size:4.5px;color:#222">Frames Alignment</div>
<svg class="a" style="left:137.5px;top:228.5px" width="5" height="5"><path d="M1 4A1.8 1.8 0 0 1 4 1" fill="none" stroke="#606060" stroke-width=".8"/></svg>
<div class="t" style="left:143px;top:229.50px;font-size:4.5px;color:#222;">1st Side</div>
<svg class="a" style="left:165.5px;top:228.5px" width="5" height="5"><circle cx="2.3" cy="2.3" r="1.7" fill="#fff" stroke="#606060" stroke-width=".7"/><circle cx="2.3" cy="2.3" r=".9" fill="#222"/></svg>
<div class="t" style="left:171px;top:229.50px;font-size:4.5px;color:#222;">Center</div>
<svg class="a" style="left:191.5px;top:228.5px" width="5" height="5"><path d="M1 4A1.8 1.8 0 0 1 4 1" fill="none" stroke="#606060" stroke-width=".8"/></svg>
<div class="t" style="left:196px;top:229.50px;font-size:4.5px;color:#222;">2nd Side</div>
<div class="t" style="left:125px;top:241.40px;font-size:4.5px;color:#b8b8b8;">Distance of Frames from</div>
<div class="t" style="left:125px;top:248.80px;font-size:4.5px;color:#b8b8b8;">Casing Side</div>
<div class="a" style="left:194px;top:246px;width:27px;height:8.5px;background:#f0f0f0;border:1px solid #c8c8c8"></div>
<div class="t" style="left:195.5px;top:248.80px;font-size:4.5px;color:#b8b8b8;">0.02</div>
<div class="a" style="left:227.5px;top:181.5px;width:85px;height:54px;border:1px solid #d6d6d6;box-shadow:inset 1px 1px 0 #fff"></div>
<div class="t" style="left:229.5px;top:180.30px;padding:0 1px;background:#f0f0f0;font-size:4.5px;color:#222">Sill</div>
<svg class="a" style="left:239.5px;top:188.4px" width="5" height="5"><path d="M0.8 4.2V0.8H4" fill="none" stroke="#707070" stroke-width=".8"/></svg>
<div class="t" style="left:246px;top:189.40px;font-size:4.5px;color:#222;">Sill Exists</div>
<div class="t" style="left:229px;top:199.80px;font-size:4.5px;color:#b8b8b8;">Thickness</div>
<div class="a" style="left:288.5px;top:196.5px;width:21.5px;height:8px;background:#f0f0f0;border:1px solid #a4a4a4"></div>
<div class="t" style="left:290px;top:199.80px;font-size:4.5px;color:#b8b8b8;">0.03</div>
<div class="t" style="left:229px;top:209.30px;font-size:4.5px;color:#b8b8b8;">Protrusion 1</div>
<div class="a" style="left:288.5px;top:206px;width:21.5px;height:8px;background:#f0f0f0;border:1px solid #a4a4a4"></div>
<div class="t" style="left:290px;top:209.30px;font-size:4.5px;color:#b8b8b8;">0.01</div>
<div class="t" style="left:229px;top:218.30px;font-size:4.5px;color:#b8b8b8;">Protrusion 2</div>
<div class="a" style="left:288.5px;top:215.5px;width:21.5px;height:8px;background:#f0f0f0;border:1px solid #a4a4a4"></div>
<div class="t" style="left:290px;top:218.30px;font-size:4.5px;color:#b8b8b8;">0.04</div>
<div class="a" style="left:228.5px;top:225px;width:34px;height:8.6px;background:#f0f0f0;border-right:1px solid #b0b0b0;border-bottom:1px solid #b0b0b0;box-shadow:inset 1px 1px 0 #fff,inset -1px -1px 0 #d8d8d8"></div>
<div class="t" style="left:228.5px;width:34px;text-align:center;top:228.10px;font-size:4.5px;color:#b8b8b8">Color 3D...</div>
<div class="a" style="left:271.5px;top:225.5px;width:7.5px;height:8px;background:#d8f070"></div>
<div class="t" style="left:284px;top:228.30px;font-size:4.5px;color:#b8b8b8;">BYLAYER</div>
<svg class="a" style="left:236.5px;top:239.4px" width="5" height="5"><path d="M0.8 4.2V0.8H4" fill="none" stroke="#707070" stroke-width=".8"/></svg>
<div class="a" style="left:251px;top:237px;width:35px;height:9px;background:#f0f0f0;border-right:1px solid #b0b0b0;border-bottom:1px solid #b0b0b0;box-shadow:inset 1px 1px 0 #fff,inset -1px -1px 0 #d8d8d8"></div>
<div class="t" style="left:251px;width:35px;text-align:center;top:240.30px;font-size:4.5px;color:#b8b8b8">Attributes...</div>
<svg class="a" style="left:236.5px;top:250.10000000000002px" width="5" height="5"><path d="M0.7 4.2V0.7H4" fill="none" stroke="#707070" stroke-width=".8"/><path d="M1.1 2l1.1 1.4 1.8-2.3" fill="none" stroke="#333" stroke-width="1"/></svg>
<div class="a" style="left:251px;top:248px;width:27px;height:9.5px;background:#f0f0f0;border-right:1px solid #6a6a6a;border-bottom:1px solid #6a6a6a;box-shadow:inset 1px 1px 0 #fff,inset -1px -1px 0 #a8a8a8"></div>
<div class="t" style="left:251px;width:27px;text-align:center;top:251.55px;font-size:4.5px;color:#222">Label...</div>
<div class="a" style="left:148.7px;top:260.5px;width:27px;height:11px;background:#f0f0f0;border-right:1px solid #6a6a6a;border-bottom:1px solid #6a6a6a;box-shadow:inset 1px 1px 0 #fff,inset -1px -1px 0 #a8a8a8"></div>
<div class="t" style="left:148.7px;width:27px;text-align:center;top:264.80px;font-size:4.5px;color:#222">Accept</div>
<div class="a" style="left:182.4px;top:260.5px;width:28px;height:11px;background:#f0f0f0;border-right:1px solid #6a6a6a;border-bottom:1px solid #6a6a6a;box-shadow:inset 1px 1px 0 #fff,inset -1px -1px 0 #a8a8a8"></div>
<div class="t" style="left:182.4px;width:28px;text-align:center;top:264.80px;font-size:4.5px;color:#222">Cancel</div>
</div></body></html>
